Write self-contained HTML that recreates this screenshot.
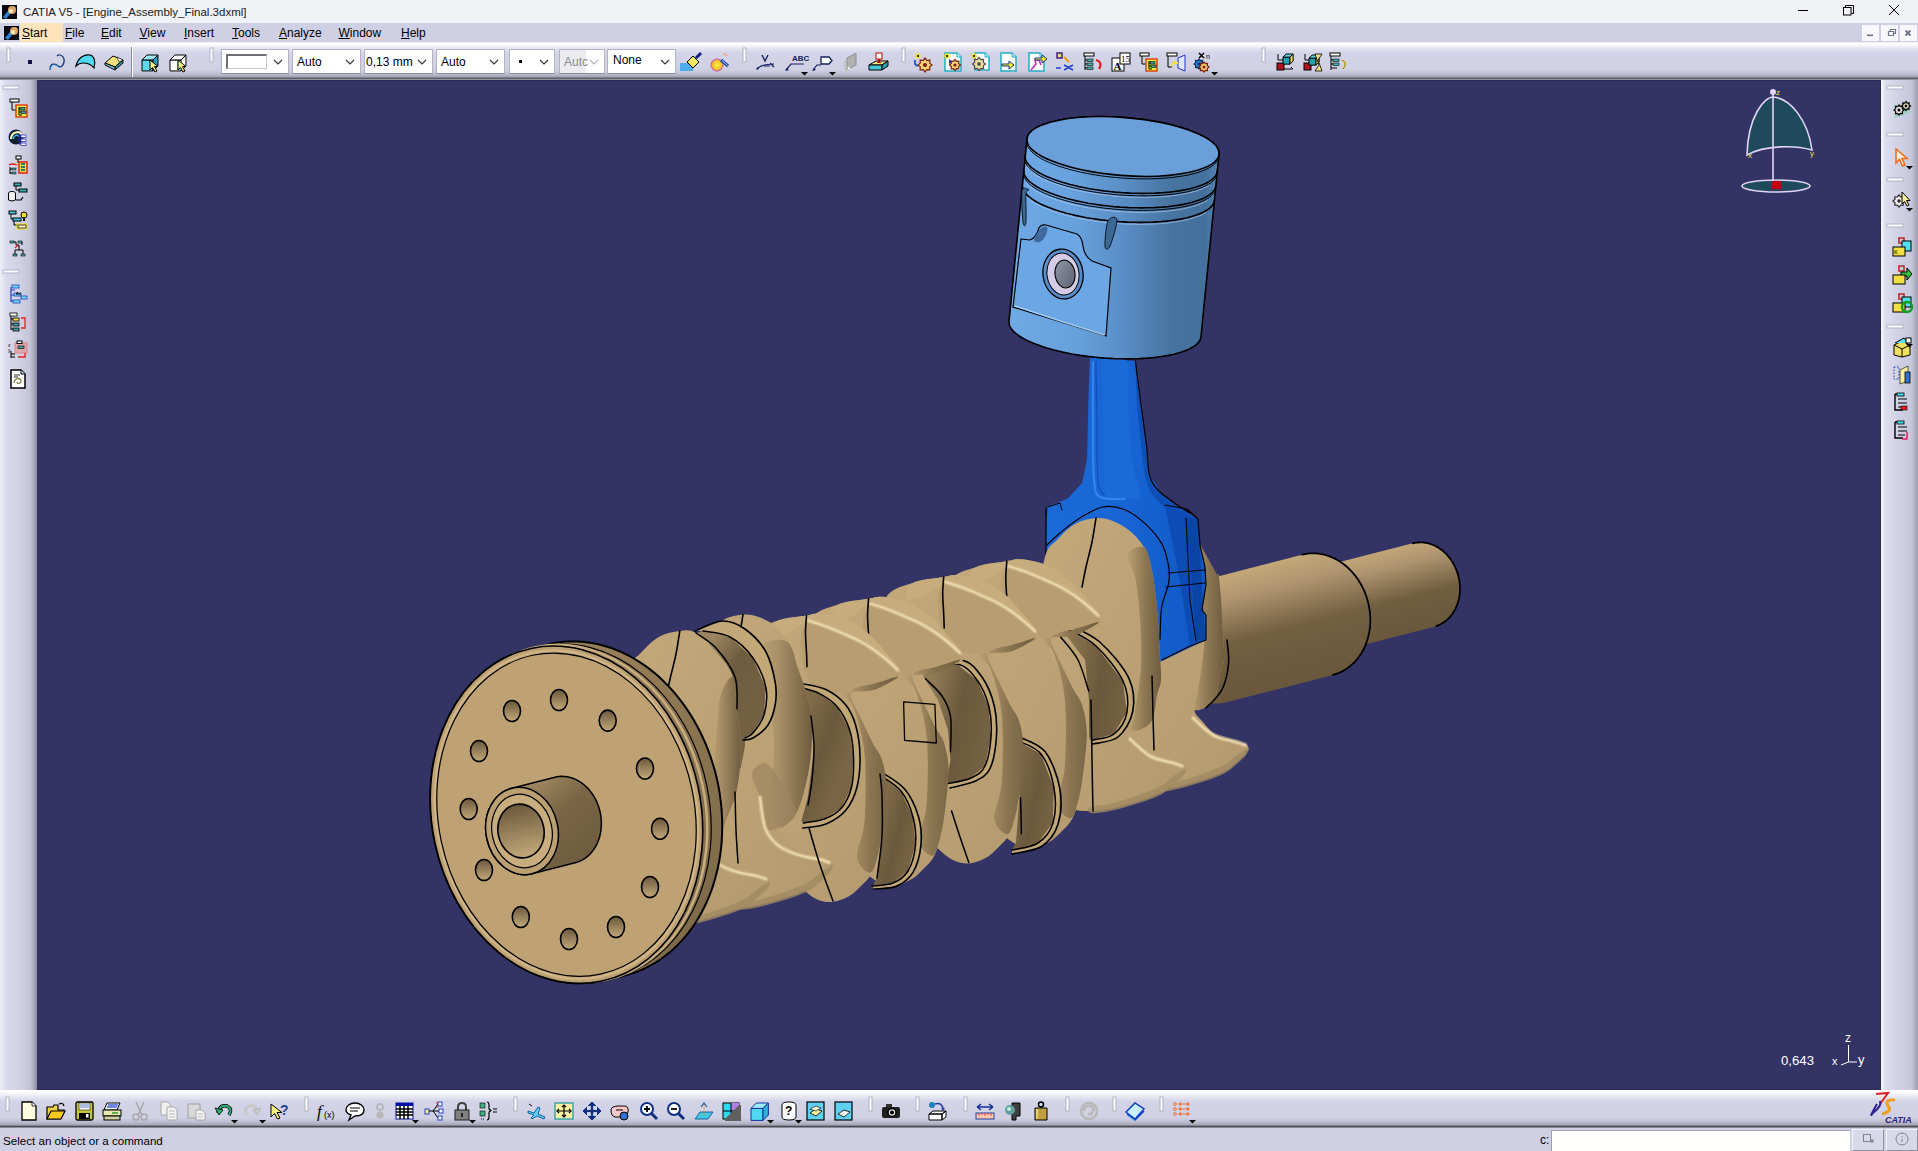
<!DOCTYPE html><html><head><meta charset="utf-8"><style>
*{margin:0;padding:0;box-sizing:border-box}
html,body{width:1918px;height:1151px;overflow:hidden;background:#d0d0e4;font-family:"Liberation Sans",sans-serif;font-size:12px;color:#000}
.abs{position:absolute}
#title{left:0;top:0;width:1918px;height:23px;background:#f0f2f5}
#menu{left:0;top:23px;width:1918px;height:19px;background:#d0d0e4}
#tb{left:0;top:42px;width:1918px;height:38px;background:linear-gradient(#e8e8f4 0px,#ffffff 1.5px,#f8f8fc 3px,#e2e2f0 7px,#d4d4e8 11px,#d0d0e4 28px,#bdbdd0 32px,#a4a4b4 35px,#4c4c54 36.2px,#8a8a98 37px,#9a9aaa 38px)}
#lt{left:0;top:80px;width:37px;height:1011px;background:linear-gradient(90deg,#eeeef8 0px,#dadaec 6px,#d0d0e4 20px,#c4c4d8 30px,#a0a0b4 35px,#8a8a9c 37px)}
#rt{left:1881px;top:80px;width:37px;height:1011px;background:linear-gradient(90deg,#fafaff 0px,#dedeee 4px,#d0d0e4 18px,#c8c8dc 30px,#a4a4b8 36px)}
#vp{left:37px;top:80px;width:1844px;height:1010px;background:#333366;overflow:hidden;border-top:1px solid #2c2c58;border-right:1px solid #2a2a52;border-bottom:1px solid #2a2a52}
#bt{left:0;top:1090px;width:1918px;height:38px;background:linear-gradient(#ffffff 0px,#fcfcff 2px,#e6e6f2 7px,#d4d4e8 11px,#d0d0e4 28px,#bdbdd0 32px,#a4a4b4 35px,#4c4c54 36.5px,#8a8a98 37.5px,#c8c8dc 38px)}
#st{left:0;top:1128px;width:1918px;height:23px;background:#d0d0e4}
.menuitem{position:absolute;top:26px;font-size:12px;color:#000}
.u{text-decoration:underline}
</style></head><body>
<div id="title" class="abs"></div>
<div id="menu" class="abs"></div>
<div id="tb" class="abs"></div>
<div id="lt" class="abs"></div>
<div id="rt" class="abs"></div>
<div id="bt" class="abs"></div>
<div id="st" class="abs"></div>
<div id="vp" class="abs"></div>
<div class="abs" style="left:23px;top:6.5px;font-size:11.5px;white-space:pre;line-height:1;color:#1a1a1a">CATIA V5 - [Engine_Assembly_Final.3dxml]</div>
<div class="abs" style="left:20px;top:23px;width:43px;height:19px;background:#fde4bd"></div>
<div class="abs" style="left:22px;top:27px;font-size:12px;white-space:pre;line-height:1;text-decoration-thickness:1px;text-underline-offset:1px"><u>S</u>tart</div>
<div class="abs" style="left:65px;top:27px;font-size:12px;white-space:pre;line-height:1;text-decoration-thickness:1px;text-underline-offset:1px"><u>F</u>ile</div>
<div class="abs" style="left:101px;top:27px;font-size:12px;white-space:pre;line-height:1;text-decoration-thickness:1px;text-underline-offset:1px"><u>E</u>dit</div>
<div class="abs" style="left:139.5px;top:27px;font-size:12px;white-space:pre;line-height:1;text-decoration-thickness:1px;text-underline-offset:1px"><u>V</u>iew</div>
<div class="abs" style="left:184px;top:27px;font-size:12px;white-space:pre;line-height:1;text-decoration-thickness:1px;text-underline-offset:1px"><u>I</u>nsert</div>
<div class="abs" style="left:232px;top:27px;font-size:12px;white-space:pre;line-height:1;text-decoration-thickness:1px;text-underline-offset:1px"><u>T</u>ools</div>
<div class="abs" style="left:279px;top:27px;font-size:12px;white-space:pre;line-height:1;text-decoration-thickness:1px;text-underline-offset:1px"><u>A</u>nalyze</div>
<div class="abs" style="left:338.5px;top:27px;font-size:12px;white-space:pre;line-height:1;text-decoration-thickness:1px;text-underline-offset:1px"><u>W</u>indow</div>
<div class="abs" style="left:401px;top:27px;font-size:12px;white-space:pre;line-height:1;text-decoration-thickness:1px;text-underline-offset:1px"><u>H</u>elp</div>
<div class="abs" style="left:1862px;top:25px;width:17px;height:16px;background:#f8f8fc"></div>
<div class="abs" style="left:1881px;top:25px;width:17px;height:16px;background:#f8f8fc"></div>
<div class="abs" style="left:1900px;top:25px;width:17px;height:16px;background:#f8f8fc"></div>
<div class="abs" style="left:221px;top:49px;width:68px;height:25px;background:#fff;border:1px solid #b4b4c0;border-bottom-color:#8c8c98"></div>
<div class="abs" style="left:226px;top:54px;width:41px;height:15px;background:#fff;border:1px solid #c8c8cc;border-top:2px solid #707070;border-left:2px solid #707070"></div>
<div class="abs" style="left:292px;top:49px;width:69px;height:25px;background:#fff;border:1px solid #b4b4c0;border-bottom-color:#8c8c98"></div>
<div class="abs" style="left:297px;top:56px;font-size:12px;white-space:pre;line-height:1;color:#000">Auto</div>
<div class="abs" style="left:364px;top:49px;width:69px;height:25px;background:#fff;border:1px solid #b4b4c0;border-bottom-color:#8c8c98"></div>
<div class="abs" style="left:366px;top:56px;font-size:12px;white-space:pre;line-height:1;color:#000">0,13 mm</div>
<div class="abs" style="left:436px;top:49px;width:69px;height:25px;background:#fff;border:1px solid #b4b4c0;border-bottom-color:#8c8c98"></div>
<div class="abs" style="left:441px;top:56px;font-size:12px;white-space:pre;line-height:1;color:#000">Auto</div>
<div class="abs" style="left:509px;top:49px;width:46px;height:25px;background:#fff;border:1px solid #b4b4c0;border-bottom-color:#8c8c98"></div>
<div class="abs" style="left:559px;top:49px;width:46px;height:25px;background:#fff;border:1px solid #b4b4c0;border-bottom-color:#8c8c98"></div>
<div class="abs" style="left:560px;top:50px;width:26px;height:23px;background:#ececf0"></div>
<div class="abs" style="left:564px;top:56px;font-size:12px;white-space:pre;line-height:1;color:#8a8a90">Autc</div>
<div class="abs" style="left:607px;top:49px;width:69px;height:25px;background:#fff;border:1px solid #b4b4c0;border-bottom-color:#8c8c98"></div>
<div class="abs" style="left:613px;top:54px;font-size:12px;white-space:pre;line-height:1;">None</div>
<div class="abs" style="left:3px;top:1135px;font-size:11.6px;white-space:pre;line-height:1;">Select an object or a command</div>
<div class="abs" style="left:1540px;top:1134px;font-size:12px;white-space:pre;line-height:1;">c:</div>
<div class="abs" style="left:1551px;top:1130px;width:299px;height:21px;background:#fffffe;border-top:1px solid #a0a0b0;border-left:1px solid #a0a0b0"></div>
<div class="abs" style="left:1852px;top:1129px;width:32px;height:22px;background:#d8d8e8;border:1px solid #f4f4fc;border-right-color:#9090a0;border-bottom-color:#9090a0"></div>
<div class="abs" style="left:1886px;top:1129px;width:32px;height:22px;background:#d8d8e8;border:1px solid #f4f4fc;border-right-color:#9090a0;border-bottom-color:#9090a0"></div>
<div class="abs" style="left:1781px;top:1054px;font-size:13.2px;white-space:pre;line-height:1;color:#fff">0,643</div>
<div class="abs" style="left:1845px;top:1032px;font-size:12px;white-space:pre;line-height:1;color:#fff">z</div>
<div class="abs" style="left:1858px;top:1053px;font-size:13px;white-space:pre;line-height:1;color:#fff">y</div>
<div class="abs" style="left:1832px;top:1056px;font-size:11px;white-space:pre;line-height:1;color:#fff">x</div>
<svg class="abs" style="left:0;top:0" width="1918" height="1151" viewBox="0 0 1918 1151">
<defs><linearGradient id="gBig" gradientUnits="userSpaceOnUse" x1="1284.6" y1="558.9" x2="1315.4" y2="679.1"><stop offset="0" stop-color="#c4a878"/><stop offset="0.2" stop-color="#b09570"/><stop offset="0.55" stop-color="#735f42"/><stop offset="1" stop-color="#6a583c"/></linearGradient><linearGradient id="gSm" gradientUnits="userSpaceOnUse" x1="1389.3" y1="549.3" x2="1410.7" y2="632.7"><stop offset="0" stop-color="#c2a676"/><stop offset="0.2" stop-color="#ae9470"/><stop offset="0.6" stop-color="#715e41"/><stop offset="1" stop-color="#6a583c"/></linearGradient><linearGradient id="gUp" gradientUnits="userSpaceOnUse" x1="0.0" y1="0.0" x2="0.0" y2="0.0"><stop offset="0" stop-color="#c2a778"/><stop offset="1" stop-color="#b09569"/></linearGradient><linearGradient id="gNeck" x1="0" y1="0" x2="1" y2="0"><stop offset="0" stop-color="#b89e72"/><stop offset="0.5" stop-color="#8a7450"/><stop offset="1" stop-color="#6e5c40"/></linearGradient><linearGradient id="gSide" x1="0" y1="0" x2="1" y2="0"><stop offset="0" stop-color="#bca274"/><stop offset="0.5" stop-color="#8f7954"/><stop offset="1" stop-color="#6e5c40"/></linearGradient><linearGradient id="gSide2" x1="0" y1="0" x2="1" y2="0"><stop offset="0" stop-color="#bca274"/><stop offset="0.35" stop-color="#a89068"/><stop offset="0.75" stop-color="#87714e"/><stop offset="1" stop-color="#6e5c40"/></linearGradient><linearGradient id="gWeb" x1="0" y1="0" x2="1" y2="1"><stop offset="0" stop-color="#c4a97b"/><stop offset="1" stop-color="#b39a6e"/></linearGradient><linearGradient id="gJ1" gradientUnits="userSpaceOnUse" x1="705.0" y1="650.0" x2="765.0" y2="690.0"><stop offset="0" stop-color="#9b8560"/><stop offset="0.45" stop-color="#6e5c40"/><stop offset="1" stop-color="#746144"/></linearGradient><linearGradient id="gJ2" gradientUnits="userSpaceOnUse" x1="805.0" y1="720.0" x2="855.0" y2="740.0"><stop offset="0" stop-color="#7e6a49"/><stop offset="0.5" stop-color="#6b593d"/><stop offset="1" stop-color="#7a6646"/></linearGradient><linearGradient id="gJ3" gradientUnits="userSpaceOnUse" x1="880.0" y1="820.0" x2="920.0" y2="830.0"><stop offset="0" stop-color="#7e6a49"/><stop offset="0.5" stop-color="#6b593d"/><stop offset="1" stop-color="#7a6646"/></linearGradient><linearGradient id="gJ4" gradientUnits="userSpaceOnUse" x1="925.0" y1="720.0" x2="995.0" y2="735.0"><stop offset="0" stop-color="#8f7a55"/><stop offset="0.45" stop-color="#6b593d"/><stop offset="1" stop-color="#776344"/></linearGradient><linearGradient id="gJ5" gradientUnits="userSpaceOnUse" x1="1012.0" y1="790.0" x2="1060.0" y2="800.0"><stop offset="0" stop-color="#7e6a49"/><stop offset="0.5" stop-color="#6b593d"/><stop offset="1" stop-color="#7a6646"/></linearGradient><linearGradient id="gJ6" gradientUnits="userSpaceOnUse" x1="1063.0" y1="690.0" x2="1133.0" y2="700.0"><stop offset="0" stop-color="#8a7450"/><stop offset="0.5" stop-color="#6b593d"/><stop offset="1" stop-color="#776344"/></linearGradient><linearGradient id="gRod" gradientUnits="userSpaceOnUse" x1="1046.0" y1="500.0" x2="1206.0" y2="500.0"><stop offset="0" stop-color="#1c6ad8"/><stop offset="0.5" stop-color="#1864d4"/><stop offset="1" stop-color="#1058c4"/></linearGradient><linearGradient id="gRim" x1="0" y1="0" x2="1" y2="1"><stop offset="0" stop-color="#a48a62"/><stop offset="0.6" stop-color="#8a7450"/><stop offset="1" stop-color="#7a6646"/></linearGradient><linearGradient id="gHole" gradientUnits="userSpaceOnUse" x1="0.0" y1="-10.0" x2="0.0" y2="10.0"><stop offset="0" stop-color="#6e5c40"/><stop offset="1" stop-color="#c8ad7e"/></linearGradient><linearGradient id="gH" x1="0" y1="0" x2="0" y2="1"><stop offset="0" stop-color="#6a583c"/><stop offset="1" stop-color="#c4a97a"/></linearGradient><linearGradient id="gHub" x1="0" y1="0" x2="1" y2="1"><stop offset="0" stop-color="#c0a577"/><stop offset="0.5" stop-color="#7a6646"/><stop offset="1" stop-color="#6a583c"/></linearGradient><linearGradient id="gPist" gradientUnits="userSpaceOnUse" x1="1010.0" y1="250.0" x2="1215.0" y2="250.0"><stop offset="0" stop-color="#70a9e6"/><stop offset="0.3" stop-color="#68a2de"/><stop offset="0.55" stop-color="#5a8ec6"/><stop offset="0.8" stop-color="#46739f"/><stop offset="0.95" stop-color="#44709c"/><stop offset="1" stop-color="#5080b0"/></linearGradient><linearGradient id="gPin" x1="0" y1="0" x2="1" y2="1"><stop offset="0" stop-color="#9098a8"/><stop offset="1" stop-color="#5c6070"/></linearGradient></defs><path d="M1293.5,604.6 L1293.6,602.4 L1293.8,600.2 L1294.1,598.0 L1294.5,595.9 L1294.9,593.8 L1295.5,591.7 L1296.2,589.7 L1296.9,587.8 L1297.8,585.9 L1298.7,584.0 L1299.8,582.2 L1300.9,580.5 L1302.1,578.9 L1303.3,577.4 L1304.7,575.9 L1306.1,574.6 L1307.5,573.3 L1309.1,572.1 L1310.7,571.1 L1312.3,570.1 L1314.0,569.2 L1315.8,568.5 L1317.5,567.9 L1319.3,567.3 L1412.8,543.3 L1414.7,542.9 L1416.5,542.6 L1418.4,542.5 L1420.3,542.4 L1422.2,542.4 L1424.1,542.6 L1426.0,542.9 L1428.0,543.3 L1429.8,543.8 L1431.7,544.5 L1433.6,545.2 L1435.4,546.0 L1437.2,547.0 L1438.9,548.1 L1440.6,549.2 L1442.3,550.5 L1443.9,551.8 L1445.5,553.3 L1447.0,554.8 L1448.4,556.4 L1449.7,558.1 L1451.0,559.9 L1452.2,561.7 L1453.4,563.6 L1454.4,565.6 L1455.4,567.6 L1456.3,569.7 L1457.1,571.8 L1457.8,573.9 L1458.4,576.1 L1458.9,578.3 L1459.3,580.5 L1459.6,582.7 L1459.8,584.9 L1460.0,587.2 L1460.0,589.4 L1459.9,591.6 L1459.7,593.8 L1459.4,596.0 L1459.0,598.1 L1458.6,600.2 L1458.0,602.3 L1457.3,604.3 L1456.6,606.2 L1455.7,608.1 L1454.8,610.0 L1453.7,611.8 L1452.6,613.5 L1451.4,615.1 L1450.2,616.6 L1448.8,618.1 L1447.4,619.4 L1446.0,620.7 L1444.4,621.9 L1442.8,622.9 L1441.2,623.9 L1439.5,624.8 L1437.8,625.5 L1436.0,626.1 L1434.2,626.7 L1340.7,650.7 L1338.8,651.1 L1337.0,651.4 L1335.1,651.5 L1333.2,651.6 L1331.3,651.6 L1329.4,651.4 L1327.5,651.1 L1325.5,650.7 L1323.7,650.2 L1321.8,649.5 L1319.9,648.8 L1318.1,648.0 L1316.3,647.0 L1314.6,645.9 L1312.9,644.8 L1311.2,643.5 L1309.6,642.2 L1308.0,640.7 L1306.5,639.2 L1305.1,637.6 L1303.8,635.9 L1302.5,634.1 L1301.2,632.3 L1300.1,630.4 L1299.1,628.4 L1298.1,626.4 L1297.2,624.3 L1296.4,622.2 L1295.7,620.1 L1295.1,617.9 L1294.6,615.7 L1294.2,613.5 L1293.9,611.3 L1293.7,609.1 L1293.5,606.8Z" fill="url(#gSm)" />
<path d="M" fill="none" stroke="#000" stroke-width="0" stroke-linejoin="round" stroke-linecap="round" />
<path d="M1412.8,543.3 L1414.6,542.9 L1416.5,542.6 L1418.3,542.5 L1420.2,542.4 L1422.0,542.4 L1423.9,542.6 L1425.8,542.9 L1427.6,543.2 L1429.5,543.7 L1431.3,544.3 L1433.2,545.0 L1434.9,545.8 L1436.7,546.7 L1438.4,547.8 L1440.1,548.9 L1441.8,550.1 L1443.4,551.4 L1444.9,552.8 L1446.4,554.2 L1447.8,555.8 L1449.2,557.4 L1450.5,559.1 L1451.7,560.9 L1452.8,562.7 L1453.9,564.6 L1454.9,566.6 L1455.8,568.5 L1456.6,570.6 L1457.4,572.7 L1458.0,574.8 L1458.6,576.9 L1459.1,579.1 L1459.4,581.2 L1459.7,583.4 L1459.9,585.6 L1460.0,587.8 L1460.0,590.0 L1459.9,592.1 L1459.7,594.3 L1459.4,596.4 L1459.0,598.5 L1458.5,600.5 L1457.9,602.6 L1457.2,604.5 L1456.5,606.4 L1455.6,608.3 L1454.7,610.1 L1453.7,611.8 L1452.6,613.5 L1451.4,615.1 L1450.2,616.6 L1448.9,618.0 L1447.5,619.4 L1446.1,620.6 L1444.6,621.8 L1443.0,622.8 L1441.4,623.8 L1439.8,624.6 L1438.1,625.4 L1436.3,626.0" fill="none" stroke="#000" stroke-width="1.8" stroke-linejoin="round" stroke-linecap="round" />
<path d="M1159.3,635.7 L1159.5,632.5 L1159.7,629.4 L1160.1,626.2 L1160.7,623.1 L1161.4,620.1 L1162.2,617.1 L1163.2,614.2 L1164.3,611.4 L1165.5,608.6 L1166.9,606.0 L1168.3,603.4 L1169.9,601.0 L1171.7,598.6 L1173.5,596.4 L1175.4,594.3 L1177.5,592.4 L1179.6,590.5 L1181.8,588.9 L1184.1,587.3 L1186.5,585.9 L1188.9,584.7 L1191.4,583.6 L1194.0,582.7 L1196.6,581.9 L1302.2,554.7 L1304.9,554.1 L1307.6,553.7 L1310.3,553.4 L1313.0,553.4 L1315.8,553.4 L1318.5,553.7 L1321.3,554.1 L1324.0,554.7 L1326.8,555.4 L1329.5,556.3 L1332.2,557.4 L1334.8,558.6 L1337.4,560.0 L1339.9,561.5 L1342.4,563.2 L1344.8,565.0 L1347.1,567.0 L1349.3,569.0 L1351.5,571.3 L1353.5,573.6 L1355.5,576.0 L1357.4,578.6 L1359.1,581.2 L1360.8,584.0 L1362.3,586.8 L1363.7,589.7 L1365.0,592.7 L1366.1,595.7 L1367.1,598.8 L1368.0,601.9 L1368.7,605.1 L1369.3,608.2 L1369.8,611.5 L1370.1,614.7 L1370.2,617.9 L1370.3,621.1 L1370.2,624.3 L1369.9,627.5 L1369.5,630.6 L1368.9,633.7 L1368.2,636.7 L1367.4,639.7 L1366.4,642.6 L1365.3,645.4 L1364.1,648.2 L1362.7,650.8 L1361.3,653.4 L1359.7,655.8 L1357.9,658.2 L1356.1,660.4 L1354.2,662.5 L1352.1,664.4 L1350.0,666.3 L1347.8,668.0 L1345.5,669.5 L1343.1,670.9 L1340.7,672.1 L1338.2,673.2 L1335.6,674.1 L1333.0,674.9 L1227.4,702.1 L1224.7,702.7 L1222.0,703.1 L1219.3,703.4 L1216.6,703.5 L1213.8,703.4 L1211.0,703.1 L1208.3,702.7 L1205.5,702.1 L1202.8,701.4 L1200.1,700.5 L1197.5,699.4 L1194.8,698.2 L1192.2,696.8 L1189.7,695.3 L1187.2,693.6 L1184.8,691.8 L1182.5,689.8 L1180.3,687.8 L1178.1,685.5 L1176.0,683.2 L1174.1,680.8 L1172.2,678.2 L1170.5,675.6 L1168.8,672.8 L1167.3,670.0 L1165.9,667.1 L1164.6,664.1 L1163.5,661.1 L1162.5,658.0 L1161.6,654.9 L1160.9,651.7 L1160.3,648.5 L1159.8,645.3 L1159.5,642.1 L1159.3,638.9Z" fill="url(#gBig)" />
<path d="M1302.2,554.7 L1304.9,554.1 L1307.6,553.7 L1310.3,553.4 L1313.0,553.4 L1315.8,553.4 L1318.5,553.7 L1321.3,554.1 L1324.0,554.7 L1326.8,555.4 L1329.5,556.3 L1332.1,557.4 L1334.8,558.6 L1337.4,560.0 L1339.9,561.5 L1342.4,563.2 L1344.8,565.0 L1347.1,567.0 L1349.3,569.1 L1351.5,571.3 L1353.5,573.6 L1355.5,576.0 L1357.4,578.6 L1359.1,581.2 L1360.8,584.0 L1362.3,586.8 L1363.7,589.7 L1365.0,592.7 L1366.1,595.7 L1367.1,598.8 L1368.0,601.9 L1368.7,605.1 L1369.3,608.3 L1369.8,611.5 L1370.1,614.7 L1370.3,617.9 L1370.3,621.1 L1370.2,624.3 L1369.9,627.5 L1369.5,630.6 L1368.9,633.7 L1368.2,636.7 L1367.4,639.7 L1366.4,642.6 L1365.3,645.4 L1364.1,648.2 L1362.7,650.8 L1361.3,653.4 L1359.7,655.8 L1357.9,658.2 L1356.1,660.4 L1354.2,662.5 L1352.1,664.4 L1350.0,666.3 L1347.8,668.0 L1345.5,669.5 L1343.1,670.9 L1340.7,672.1 L1338.2,673.2 L1335.6,674.1 L1333.0,674.9" fill="none" stroke="#000" stroke-width="1.8" stroke-linejoin="round" stroke-linecap="round" />
<path d="M1098.0,596.0 C1100.5,574.3 1104.3,548.8 1108.0,536.0 C1111.7,523.2 1115.0,524.5 1120.0,519.0 C1125.0,513.5 1131.5,506.7 1138.0,503.0 C1144.5,499.3 1152.7,497.5 1159.0,497.0 C1165.3,496.5 1170.3,497.8 1176.0,500.0 C1181.7,502.2 1187.8,505.7 1193.0,510.0 C1198.2,514.3 1203.5,520.2 1207.0,526.0 C1210.5,531.8 1212.2,537.8 1214.0,545.0 C1215.8,552.2 1216.8,560.0 1218.0,569.0 C1219.2,578.0 1220.2,588.0 1221.0,599.0 C1221.8,610.0 1222.5,625.0 1223.0,635.0 C1223.5,645.0 1224.5,652.5 1224.0,659.0 C1223.5,665.5 1221.7,667.0 1220.0,674.0 C1218.3,681.0 1218.2,695.0 1214.0,701.0 C1209.8,707.0 1196.8,706.5 1195.0,710.0 C1193.2,713.5 1200.0,718.2 1203.0,722.0 C1206.0,725.8 1209.2,730.0 1213.0,733.0 C1216.8,736.0 1221.8,738.3 1226.0,740.0 C1230.2,741.7 1234.3,742.0 1238.0,743.0 C1241.7,744.0 1246.7,744.3 1248.0,746.0 C1249.3,747.7 1247.3,750.8 1246.0,753.0 C1244.7,755.2 1243.5,756.0 1240.0,759.0 C1236.5,762.0 1231.3,767.5 1225.0,771.0 C1218.7,774.5 1210.7,777.2 1202.0,780.0 C1193.3,782.8 1181.0,786.3 1173.0,788.0 C1165.0,789.7 1160.3,790.0 1154.0,790.0 C1147.7,790.0 1141.8,790.3 1135.0,788.0 C1128.2,785.7 1119.2,783.0 1113.0,776.0 C1106.8,769.0 1101.3,764.3 1098.0,746.0 C1094.7,727.7 1093.0,691.0 1093.0,666.0 C1093.0,641.0 1095.5,617.7 1098.0,596.0Z" fill="url(#gWeb)" />
<path d="M1207.0,526.0 C1211.0,527.8 1212.2,537.8 1214.0,545.0 C1215.8,552.2 1216.8,560.0 1218.0,569.0 C1219.2,578.0 1220.2,588.0 1221.0,599.0 C1221.8,610.0 1222.5,625.0 1223.0,635.0 C1223.5,645.0 1224.5,652.5 1224.0,659.0 C1223.5,665.5 1221.7,667.0 1220.0,674.0 C1218.3,681.0 1218.2,695.0 1214.0,701.0 C1209.8,707.0 1197.7,711.7 1195.0,710.0 C1192.3,708.3 1196.5,701.7 1198.0,691.0 C1199.5,680.3 1203.2,661.8 1204.0,646.0 C1204.8,630.2 1204.0,611.0 1203.0,596.0 C1202.0,581.0 1200.2,566.3 1198.0,556.0 C1195.8,545.7 1188.5,539.0 1190.0,534.0 C1191.5,529.0 1203.0,524.2 1207.0,526.0Z" fill="url(#gSide)" />
<path d="M1249.0,748.0 C1250.3,748.2 1247.5,752.8 1246.0,755.0 C1244.5,757.2 1243.5,758.0 1240.0,761.0 C1236.5,764.0 1231.3,769.5 1225.0,773.0 C1218.7,776.5 1210.7,779.2 1202.0,782.0 C1193.3,784.8 1181.0,788.3 1173.0,790.0 C1165.0,791.7 1157.3,792.7 1154.0,792.0 C1150.7,791.3 1149.8,787.5 1153.0,786.0 C1156.2,784.5 1164.8,785.0 1173.0,783.0 C1181.2,781.0 1193.5,777.0 1202.0,774.0 C1210.5,771.0 1218.0,768.3 1224.0,765.0 C1230.0,761.7 1233.8,756.8 1238.0,754.0 C1242.2,751.2 1247.7,747.8 1249.0,748.0Z" fill="#a08962" opacity="0.8"/>
<path d="M1193.0,718.0 C1196.3,720.8 1205.8,731.0 1213.0,735.0 C1220.2,739.0 1230.7,740.3 1236.0,742.0 C1241.3,743.7 1243.5,744.5 1245.0,745.0" fill="none" stroke="#d8c292" stroke-width="5" stroke-linecap="round" opacity="0.6"/>
<path d="M1193.0,718.0 C1196.3,720.8 1205.8,731.0 1213.0,735.0 C1220.2,739.0 1230.7,740.3 1236.0,742.0 C1241.3,743.7 1243.5,744.5 1245.0,745.0" fill="none" stroke="#ecdcb0" stroke-width="2.2" stroke-linecap="round" opacity="0.85"/>
<path d="M1159.0,497.0 C1158.3,501.0 1156.7,512.8 1155.0,521.0 C1153.3,529.2 1150.7,538.5 1149.0,546.0 C1147.3,553.5 1145.7,562.7 1145.0,566.0" fill="none" stroke="#000" stroke-width="1.6" stroke-linecap="round" />
<path d="M1150.0,470.0 L1245.0,470.0 L1245.0,567.0 L1217.0,574.5 L1200.0,544.0 L1183.0,515.0 L1150.0,505.0Z" fill="#333366" />
<path d="M1090.0,358.0 L1088.5,397.0 L1087.0,459.5 L1082.0,483.0 L1068.0,498.6 L1047.8,506.4 L1046.0,530.0 L1046.0,600.0 L1100.0,640.0 L1160.0,662.0 L1185.0,650.0 L1206.0,640.0 L1206.0,615.0 L1202.0,610.0 L1206.0,585.0 L1205.0,567.0 L1200.0,545.0 L1198.0,519.0 L1187.0,512.7 L1174.5,504.8 L1162.0,494.0 L1149.5,475.0 L1146.3,443.8 L1140.0,397.0 L1135.4,361.0Z" fill="url(#gRod)" />
<path d="M1094.0,360.0 C1089.8,360.0 1099.5,350.0 1101.0,360.0 C1102.5,370.0 1102.5,400.0 1103.0,420.0 C1103.5,440.0 1103.2,467.3 1104.0,480.0 C1104.8,492.7 1104.0,493.0 1108.0,496.0 C1112.0,499.0 1122.7,498.0 1128.0,498.0 C1133.3,498.0 1139.3,502.3 1140.0,496.0 C1140.7,489.7 1134.0,476.0 1132.0,460.0 C1130.0,444.0 1129.0,416.7 1128.0,400.0 C1127.0,383.3 1131.7,366.7 1126.0,360.0 C1120.3,353.3 1098.2,360.0 1094.0,360.0Z" fill="#1a6ad8" />
<path d="M1093.0,362.0 C1093.0,373.3 1092.8,410.3 1093.0,430.0 C1093.2,449.7 1092.8,468.8 1094.0,480.0 C1095.2,491.2 1094.8,493.8 1100.0,497.0 C1105.2,500.2 1120.8,498.7 1125.0,499.0" fill="none" stroke="#3a8cf4" stroke-width="2.2" stroke-linecap="round" opacity="0.8"/>
<path d="M1096.0,362.0 C1096.2,373.3 1096.7,410.0 1097.0,430.0 C1097.3,450.0 1096.8,471.2 1098.0,482.0 C1099.2,492.8 1103.0,492.8 1104.0,495.0" fill="none" stroke="#0c4cb0" stroke-width="1.2" stroke-linecap="round" opacity="0.8"/>
<path d="M1135.4,361.0 C1135.9,360.5 1138.2,383.2 1140.0,397.0 C1141.8,410.8 1144.7,430.8 1146.3,443.8 C1147.9,456.8 1146.9,466.6 1149.5,475.0 C1152.1,483.4 1157.8,489.0 1162.0,494.0 C1166.2,499.0 1170.3,501.7 1174.5,504.8 C1178.7,507.9 1187.8,511.8 1187.0,512.7 C1186.2,513.6 1175.3,512.5 1170.0,510.0 C1164.7,507.6 1159.0,503.0 1155.0,498.0 C1151.0,493.0 1148.3,488.8 1146.0,480.0 C1143.7,471.2 1142.5,458.3 1141.0,445.0 C1139.5,431.7 1137.9,414.0 1137.0,400.0 C1136.1,386.0 1134.9,361.5 1135.4,361.0Z" fill="#0c50b8" />
<path d="M1135.4,361.0 C1136.2,367.0 1138.2,383.2 1140.0,397.0 C1141.8,410.8 1144.7,430.8 1146.3,443.8 C1147.9,456.8 1147.5,467.3 1149.5,475.0 C1151.5,482.7 1153.8,485.3 1158.0,490.0 C1162.2,494.7 1169.2,499.2 1174.5,503.0 C1179.8,506.8 1187.4,511.3 1190.0,513.0" fill="none" stroke="#000" stroke-width="1.2" stroke-linecap="round" />
<path d="M1165.0,505.0 L1198.0,519.0 L1205.0,639.0 L1190.0,645.0 L1183.0,600.0 L1176.0,560.0 L1170.0,530.0Z" fill="#0c4cb4" />
<path d="M1185.0,518.0 L1198.0,519.0 L1205.0,639.0 L1196.0,641.0 L1192.0,580.0Z" fill="#0a44a4" />
<path d="M1165.0,505.0 L1187.0,509.0 L1198.0,519.0 L1200.0,545.0 L1205.0,567.0 L1206.0,585.0 L1202.0,610.0 L1206.0,615.0 L1206.0,640.0 L1190.0,646.0 L1162.0,660.0" fill="none" stroke="#000" stroke-width="1.2" stroke-linejoin="round" stroke-linecap="round" />
<path d="M1186.0,518.0 L1188.0,560.0 L1190.0,600.0 L1196.0,641.0" fill="none" stroke="#000" stroke-width="1.0" stroke-linejoin="round" stroke-linecap="round" />
<path d="M1168.0,573.0 L1205.0,570.0" fill="none" stroke="#000" stroke-width="1.0" stroke-linejoin="round" stroke-linecap="round" />
<path d="M1166.0,587.0 L1205.0,583.0" fill="none" stroke="#000" stroke-width="1.0" stroke-linejoin="round" stroke-linecap="round" />
<path d="M1047.0,545.0 C1049.2,543.0 1054.5,537.5 1060.0,533.0 C1065.5,528.5 1072.9,522.3 1080.0,518.0 C1087.1,513.7 1095.3,508.5 1102.5,507.0 C1109.7,505.5 1116.1,506.4 1123.0,509.0 C1129.9,511.6 1137.6,516.9 1144.0,522.6 C1150.4,528.3 1157.5,536.2 1161.6,543.4 C1165.7,550.6 1167.4,559.3 1168.6,566.0 C1169.8,572.7 1169.8,576.4 1168.6,583.4 C1167.4,590.4 1163.0,598.3 1161.6,607.7 C1160.2,617.1 1160.3,634.6 1160.0,640.0" fill="none" stroke="#000" stroke-width="1.2" stroke-linecap="round" />
<path d="M1046.0,508.0 L1046.0,560.0" fill="none" stroke="#000" stroke-width="1.2" stroke-linejoin="round" stroke-linecap="round" />
<path d="M1048.0,507.0 L1060.0,503.0 L1062.0,510.0" fill="none" stroke="#000" stroke-width="1.0" stroke-linejoin="round" stroke-linecap="round" />
<path d="M1035.0,617.0 C1037.5,595.3 1041.3,569.8 1045.0,557.0 C1048.7,544.2 1052.0,545.5 1057.0,540.0 C1062.0,534.5 1068.5,527.7 1075.0,524.0 C1081.5,520.3 1089.7,518.5 1096.0,518.0 C1102.3,517.5 1107.3,518.8 1113.0,521.0 C1118.7,523.2 1124.8,526.7 1130.0,531.0 C1135.2,535.3 1140.5,541.2 1144.0,547.0 C1147.5,552.8 1149.2,558.8 1151.0,566.0 C1152.8,573.2 1153.8,581.0 1155.0,590.0 C1156.2,599.0 1157.2,609.0 1158.0,620.0 C1158.8,631.0 1159.5,646.0 1160.0,656.0 C1160.5,666.0 1161.5,673.5 1161.0,680.0 C1160.5,686.5 1158.7,688.0 1157.0,695.0 C1155.3,702.0 1155.2,716.0 1151.0,722.0 C1146.8,728.0 1133.8,727.5 1132.0,731.0 C1130.2,734.5 1137.0,739.2 1140.0,743.0 C1143.0,746.8 1146.2,751.0 1150.0,754.0 C1153.8,757.0 1158.8,759.3 1163.0,761.0 C1167.2,762.7 1171.3,763.0 1175.0,764.0 C1178.7,765.0 1183.7,765.3 1185.0,767.0 C1186.3,768.7 1184.3,771.8 1183.0,774.0 C1181.7,776.2 1180.5,777.0 1177.0,780.0 C1173.5,783.0 1168.3,788.5 1162.0,792.0 C1155.7,795.5 1147.7,798.2 1139.0,801.0 C1130.3,803.8 1118.0,807.3 1110.0,809.0 C1102.0,810.7 1097.3,811.0 1091.0,811.0 C1084.7,811.0 1078.8,811.3 1072.0,809.0 C1065.2,806.7 1056.2,804.0 1050.0,797.0 C1043.8,790.0 1038.3,785.3 1035.0,767.0 C1031.7,748.7 1030.0,712.0 1030.0,687.0 C1030.0,662.0 1032.5,638.7 1035.0,617.0Z" fill="url(#gWeb)" />
<path d="M1144.0,547.0 C1148.0,548.8 1149.2,558.8 1151.0,566.0 C1152.8,573.2 1153.8,581.0 1155.0,590.0 C1156.2,599.0 1157.2,609.0 1158.0,620.0 C1158.8,631.0 1159.5,646.0 1160.0,656.0 C1160.5,666.0 1161.5,673.5 1161.0,680.0 C1160.5,686.5 1158.7,688.0 1157.0,695.0 C1155.3,702.0 1155.2,716.0 1151.0,722.0 C1146.8,728.0 1134.7,732.7 1132.0,731.0 C1129.3,729.3 1133.5,722.7 1135.0,712.0 C1136.5,701.3 1140.2,682.8 1141.0,667.0 C1141.8,651.2 1141.0,632.0 1140.0,617.0 C1139.0,602.0 1137.2,587.3 1135.0,577.0 C1132.8,566.7 1125.5,560.0 1127.0,555.0 C1128.5,550.0 1140.0,545.2 1144.0,547.0Z" fill="url(#gSide)" />
<path d="M1186.0,769.0 C1187.3,769.2 1184.5,773.8 1183.0,776.0 C1181.5,778.2 1180.5,779.0 1177.0,782.0 C1173.5,785.0 1168.3,790.5 1162.0,794.0 C1155.7,797.5 1147.7,800.2 1139.0,803.0 C1130.3,805.8 1118.0,809.3 1110.0,811.0 C1102.0,812.7 1094.3,813.7 1091.0,813.0 C1087.7,812.3 1086.8,808.5 1090.0,807.0 C1093.2,805.5 1101.8,806.0 1110.0,804.0 C1118.2,802.0 1130.5,798.0 1139.0,795.0 C1147.5,792.0 1155.0,789.3 1161.0,786.0 C1167.0,782.7 1170.8,777.8 1175.0,775.0 C1179.2,772.2 1184.7,768.8 1186.0,769.0Z" fill="#a08962" opacity="0.8"/>
<path d="M1130.0,739.0 C1133.3,741.8 1142.8,752.0 1150.0,756.0 C1157.2,760.0 1167.7,761.3 1173.0,763.0 C1178.3,764.7 1180.5,765.5 1182.0,766.0" fill="none" stroke="#d8c292" stroke-width="5" stroke-linecap="round" opacity="0.6"/>
<path d="M1130.0,739.0 C1133.3,741.8 1142.8,752.0 1150.0,756.0 C1157.2,760.0 1167.7,761.3 1173.0,763.0 C1178.3,764.7 1180.5,765.5 1182.0,766.0" fill="none" stroke="#ecdcb0" stroke-width="2.2" stroke-linecap="round" opacity="0.85"/>
<path d="M1096.0,518.0 C1095.3,522.0 1093.7,533.8 1092.0,542.0 C1090.3,550.2 1087.7,559.5 1086.0,567.0 C1084.3,574.5 1082.7,583.7 1082.0,587.0" fill="none" stroke="#000" stroke-width="1.6" stroke-linecap="round" />
<path d="M1063.0,631.0 L1085.0,660.0 L1089.0,700.5 L1089.0,737.0 L1092.5,744.0 L1092.5,740.0 L1114.0,734.0 L1127.0,712.0 L1123.0,681.0 L1096.0,646.0 L1066.0,628.0Z" fill="url(#gJ6)" />
<path d="M1067.0,624.0 L1099.8,642.0 L1129.0,678.6 L1132.7,711.5 L1118.0,737.0 L1092.5,744.0 L1092.5,740.0 L1114.0,734.0 L1127.0,712.0 L1123.0,681.0 L1096.0,646.0 L1066.0,628.0Z" fill="#c2a777" />
<path d="M1066.0,628.0 C1071.0,631.0 1086.5,637.2 1096.0,646.0 C1105.5,654.8 1117.8,670.0 1123.0,681.0 C1128.2,692.0 1128.5,703.2 1127.0,712.0 C1125.5,720.8 1119.8,729.3 1114.0,734.0 C1108.2,738.7 1096.1,739.0 1092.5,740.0" fill="none" stroke="#000" stroke-width="1.5" stroke-linecap="round" />
<path d="M1067.0,624.0 C1072.5,627.0 1089.5,632.9 1099.8,642.0 C1110.1,651.1 1123.5,667.0 1129.0,678.6 C1134.5,690.2 1134.5,701.8 1132.7,711.5 C1130.9,721.2 1124.7,731.6 1118.0,737.0 C1111.3,742.4 1096.8,742.8 1092.5,744.0" fill="none" stroke="#000" stroke-width="1.6" stroke-linecap="round" />
<path d="M950.8,579.2 C956.3,572.4 966.5,570.2 975.8,567.2 C985.1,564.2 999.5,562.5 1006.8,561.2 C1014.1,559.9 1014.6,559.0 1019.8,559.2 C1025.0,559.4 1032.3,560.7 1037.8,562.2 C1043.3,563.7 1047.5,565.2 1052.8,568.2 C1058.1,571.2 1064.8,575.9 1069.8,580.2 C1074.8,584.5 1078.5,589.4 1082.8,594.2 C1087.1,599.0 1092.8,605.2 1095.8,609.2 C1098.8,613.2 1099.8,616.2 1100.8,618.2 C1101.8,620.2 1102.6,619.9 1101.8,621.2 C1101.0,622.5 1100.3,624.9 1095.8,626.2 C1091.3,627.5 1081.1,627.7 1074.8,628.8 C1068.5,629.9 1062.0,630.1 1057.8,632.9 C1053.5,635.7 1050.2,641.1 1049.3,645.5 C1048.3,649.9 1050.2,654.8 1052.1,659.4 C1054.0,664.0 1057.7,666.7 1060.8,673.2 C1063.9,679.7 1068.1,689.0 1070.8,698.2 C1073.5,707.4 1075.0,716.5 1076.8,728.2 C1078.6,739.9 1081.1,757.4 1081.8,768.2 C1082.5,779.0 1081.8,786.2 1080.8,793.2 C1079.8,800.2 1077.5,805.5 1075.8,810.2 C1074.1,814.9 1073.0,817.9 1070.8,821.2 C1068.6,824.5 1066.5,826.7 1062.8,830.2 C1059.1,833.7 1054.3,839.3 1048.8,842.2 C1043.3,845.1 1036.1,847.9 1029.8,847.7 C1023.5,847.5 1017.3,845.9 1010.8,841.0 C1004.3,836.1 996.6,830.3 990.8,818.2 C985.0,806.1 980.0,786.5 975.8,768.2 C971.6,749.9 970.0,728.2 965.8,708.2 C961.6,688.2 954.6,664.9 950.8,648.2 C947.0,631.5 942.8,619.7 942.8,608.2 C942.8,596.7 945.3,586.0 950.8,579.2Z" fill="url(#gWeb)" />
<path d="M975.8,567.2 C981.8,563.5 999.5,562.5 1006.8,561.2 C1014.1,559.9 1014.6,559.0 1019.8,559.2 C1025.0,559.4 1032.3,560.7 1037.8,562.2 C1043.3,563.7 1047.5,565.2 1052.8,568.2 C1058.1,571.2 1064.8,575.9 1069.8,580.2 C1074.8,584.5 1078.5,589.4 1082.8,594.2 C1087.1,599.0 1092.8,605.2 1095.8,609.2 C1098.8,613.2 1100.3,616.7 1100.8,618.2 C1101.3,619.7 1099.3,618.7 1098.8,618.2 C1098.3,617.7 1099.8,617.4 1097.8,615.2 C1095.8,613.0 1090.8,608.5 1086.8,605.2 C1082.8,601.9 1078.1,598.2 1073.8,595.2 C1069.5,592.2 1065.5,589.7 1060.8,587.2 C1056.1,584.7 1051.5,582.7 1045.8,580.2 C1040.1,577.7 1033.0,574.5 1026.8,572.2 C1020.6,569.9 1014.8,565.2 1008.8,566.2 C1002.8,567.2 997.1,575.4 990.8,578.2 C984.5,581.0 973.3,585.0 970.8,583.2 C968.3,581.4 969.8,570.9 975.8,567.2Z" fill="#c7ac7d" />
<path d="M1008.8,566.2 C1013.1,563.5 1020.6,569.9 1026.8,572.2 C1033.0,574.5 1040.1,577.7 1045.8,580.2 C1051.5,582.7 1056.1,584.7 1060.8,587.2 C1065.5,589.7 1069.5,592.2 1073.8,595.2 C1078.1,598.2 1082.8,601.9 1086.8,605.2 C1090.8,608.5 1096.0,612.4 1097.8,615.2 C1099.6,618.0 1101.6,619.9 1097.8,622.2 C1094.0,624.5 1081.5,627.0 1074.8,628.8 C1068.1,630.6 1063.5,631.3 1057.8,632.9 C1052.1,634.5 1048.6,639.0 1040.8,638.2 C1033.0,637.4 1017.5,636.5 1010.8,628.2 C1004.1,619.9 1001.1,598.5 1000.8,588.2 C1000.5,577.9 1004.5,568.9 1008.8,566.2Z" fill="#b89d70" />
<path d="M1098.8,622.2 C1098.6,621.2 1081.6,627.4 1074.8,629.2 C1068.0,631.0 1061.8,631.4 1057.8,633.2 C1053.8,635.0 1050.3,635.2 1050.8,640.2 C1051.3,645.2 1057.1,655.2 1060.8,663.2 C1064.5,671.2 1069.2,681.1 1072.8,688.2 C1076.4,695.3 1080.0,698.2 1082.3,705.6 C1084.6,713.0 1086.5,722.2 1086.8,732.6 C1087.0,743.0 1085.1,757.3 1083.8,768.2 C1082.5,779.1 1081.0,789.9 1078.8,798.2 C1076.6,806.5 1074.4,817.4 1070.8,818.2 C1067.2,819.0 1058.3,811.8 1057.3,803.2 C1056.3,794.6 1063.5,784.0 1064.8,766.6 C1066.0,749.2 1066.6,717.4 1064.8,698.6 C1063.0,679.8 1057.5,663.3 1053.8,653.6 C1050.1,643.9 1042.5,642.9 1042.8,640.2 C1043.1,637.5 1050.3,638.0 1055.8,637.2 C1061.3,636.4 1068.6,637.7 1075.8,635.2 C1083.0,632.7 1099.0,623.2 1098.8,622.2Z" fill="url(#gNeck)" />
<path d="M1008.8,566.2 C1011.8,567.2 1020.6,569.9 1026.8,572.2 C1033.0,574.5 1040.1,577.7 1045.8,580.2 C1051.5,582.7 1056.1,584.7 1060.8,587.2 C1065.5,589.7 1069.5,592.2 1073.8,595.2 C1078.1,598.2 1082.8,601.9 1086.8,605.2 C1090.8,608.5 1096.0,613.5 1097.8,615.2" fill="none" stroke="#d8c292" stroke-width="5" stroke-linecap="round" opacity="0.6"/>
<path d="M1008.8,566.2 C1011.8,567.2 1020.6,569.9 1026.8,572.2 C1033.0,574.5 1040.1,577.7 1045.8,580.2 C1051.5,582.7 1056.1,584.7 1060.8,587.2 C1065.5,589.7 1069.5,592.2 1073.8,595.2 C1078.1,598.2 1082.8,601.9 1086.8,605.2 C1090.8,608.5 1096.0,613.5 1097.8,615.2" fill="none" stroke="#ecdcb0" stroke-width="2.2" stroke-linecap="round" opacity="0.85"/>
<path d="M1006.8,561.2 C1006.6,564.0 1005.8,572.0 1005.8,578.2 C1005.8,584.4 1006.5,592.5 1006.8,598.2 C1007.0,603.9 1007.2,609.9 1007.3,612.2" fill="none" stroke="#000" stroke-width="1.6" stroke-linecap="round" />
<path d="M1012.0,744.0 L1019.5,795.4 L1016.0,842.8 L1012.0,850.0 L1012.0,850.0 L1038.0,843.0 L1053.0,823.0 L1054.0,788.0 L1041.0,754.0 L1016.0,740.0Z" fill="url(#gJ5)" />
<path d="M1019.5,737.0 L1045.0,751.6 L1059.7,788.0 L1057.9,824.6 L1041.4,846.5 L1012.0,854.0 L1012.0,850.0 L1038.0,843.0 L1053.0,823.0 L1054.0,788.0 L1041.0,754.0 L1016.0,740.0Z" fill="#c2a777" />
<path d="M1016.0,740.0 C1020.2,742.3 1034.7,746.0 1041.0,754.0 C1047.3,762.0 1052.0,776.5 1054.0,788.0 C1056.0,799.5 1055.7,813.8 1053.0,823.0 C1050.3,832.2 1044.8,838.5 1038.0,843.0 C1031.2,847.5 1016.3,848.8 1012.0,850.0" fill="none" stroke="#000" stroke-width="1.5" stroke-linecap="round" />
<path d="M1019.5,737.0 C1023.8,739.4 1038.3,743.1 1045.0,751.6 C1051.7,760.1 1057.5,775.8 1059.7,788.0 C1061.9,800.2 1061.0,814.9 1057.9,824.6 C1054.9,834.4 1049.1,841.6 1041.4,846.5 C1033.8,851.4 1016.9,852.8 1012.0,854.0" fill="none" stroke="#000" stroke-width="1.6" stroke-linecap="round" />
<path d="M887.7,595.0 C893.2,588.2 903.4,586.0 912.7,583.0 C922.0,580.0 936.4,578.3 943.7,577.0 C951.0,575.7 951.5,574.8 956.7,575.0 C961.9,575.2 969.2,576.5 974.7,578.0 C980.2,579.5 984.4,581.0 989.7,584.0 C995.0,587.0 1001.7,591.7 1006.7,596.0 C1011.7,600.3 1015.4,605.2 1019.7,610.0 C1024.0,614.8 1029.7,621.0 1032.7,625.0 C1035.7,629.0 1036.7,632.0 1037.7,634.0 C1038.7,636.0 1039.5,635.7 1038.7,637.0 C1037.9,638.3 1037.2,640.7 1032.7,642.0 C1028.2,643.3 1018.0,643.5 1011.7,644.6 C1005.4,645.7 999.0,645.9 994.7,648.7 C990.5,651.5 987.2,656.9 986.2,661.3 C985.2,665.7 987.1,670.6 989.0,675.2 C990.9,679.8 994.6,682.5 997.7,689.0 C1000.8,695.5 1005.0,704.8 1007.7,714.0 C1010.4,723.2 1011.9,732.3 1013.7,744.0 C1015.5,755.7 1018.0,773.2 1018.7,784.0 C1019.4,794.8 1018.7,802.0 1017.7,809.0 C1016.7,816.0 1014.4,821.3 1012.7,826.0 C1011.0,830.7 1009.9,833.7 1007.7,837.0 C1005.5,840.3 1003.4,842.5 999.7,846.0 C996.0,849.5 991.2,855.1 985.7,858.0 C980.2,860.9 973.0,863.7 966.7,863.5 C960.4,863.3 954.2,861.7 947.7,856.8 C941.2,851.9 933.5,846.1 927.7,834.0 C921.9,821.9 916.9,802.3 912.7,784.0 C908.5,765.7 906.9,744.0 902.7,724.0 C898.5,704.0 891.5,680.7 887.7,664.0 C883.9,647.3 879.7,635.5 879.7,624.0 C879.7,612.5 882.2,601.8 887.7,595.0Z" fill="url(#gWeb)" />
<path d="M912.7,583.0 C918.7,579.3 936.4,578.3 943.7,577.0 C951.0,575.7 951.5,574.8 956.7,575.0 C961.9,575.2 969.2,576.5 974.7,578.0 C980.2,579.5 984.4,581.0 989.7,584.0 C995.0,587.0 1001.7,591.7 1006.7,596.0 C1011.7,600.3 1015.4,605.2 1019.7,610.0 C1024.0,614.8 1029.7,621.0 1032.7,625.0 C1035.7,629.0 1037.2,632.5 1037.7,634.0 C1038.2,635.5 1036.2,634.5 1035.7,634.0 C1035.2,633.5 1036.7,633.2 1034.7,631.0 C1032.7,628.8 1027.7,624.3 1023.7,621.0 C1019.7,617.7 1015.0,614.0 1010.7,611.0 C1006.4,608.0 1002.4,605.5 997.7,603.0 C993.0,600.5 988.4,598.5 982.7,596.0 C977.0,593.5 969.9,590.3 963.7,588.0 C957.5,585.7 951.7,581.0 945.7,582.0 C939.7,583.0 934.0,591.2 927.7,594.0 C921.4,596.8 910.2,600.8 907.7,599.0 C905.2,597.2 906.7,586.7 912.7,583.0Z" fill="#c7ac7d" />
<path d="M945.7,582.0 C950.0,579.3 957.5,585.7 963.7,588.0 C969.9,590.3 977.0,593.5 982.7,596.0 C988.4,598.5 993.0,600.5 997.7,603.0 C1002.4,605.5 1006.4,608.0 1010.7,611.0 C1015.0,614.0 1019.7,617.7 1023.7,621.0 C1027.7,624.3 1032.9,628.2 1034.7,631.0 C1036.5,633.8 1038.5,635.7 1034.7,638.0 C1030.9,640.3 1018.4,642.8 1011.7,644.6 C1005.0,646.4 1000.4,647.1 994.7,648.7 C989.0,650.3 985.5,654.8 977.7,654.0 C969.9,653.2 954.4,652.3 947.7,644.0 C941.0,635.7 938.0,614.3 937.7,604.0 C937.4,593.7 941.4,584.7 945.7,582.0Z" fill="#b89d70" />
<path d="M1035.7,638.0 C1035.5,637.0 1018.5,643.2 1011.7,645.0 C1004.9,646.8 998.7,647.2 994.7,649.0 C990.7,650.8 987.2,651.0 987.7,656.0 C988.2,661.0 994.0,671.0 997.7,679.0 C1001.4,687.0 1006.1,696.9 1009.7,704.0 C1013.3,711.1 1016.9,714.0 1019.2,721.4 C1021.5,728.8 1023.5,738.0 1023.7,748.4 C1024.0,758.8 1022.0,773.1 1020.7,784.0 C1019.4,794.9 1017.9,805.7 1015.7,814.0 C1013.5,822.3 1011.3,833.2 1007.7,834.0 C1004.1,834.8 995.2,827.6 994.2,819.0 C993.2,810.4 1000.5,799.8 1001.7,782.4 C1003.0,765.0 1003.5,733.2 1001.7,714.4 C999.9,695.6 994.4,679.1 990.7,669.4 C987.0,659.7 979.4,658.7 979.7,656.0 C980.0,653.3 987.2,653.8 992.7,653.0 C998.2,652.2 1005.5,653.5 1012.7,651.0 C1019.9,648.5 1035.9,639.0 1035.7,638.0Z" fill="url(#gNeck)" />
<path d="M945.7,582.0 C948.7,583.0 957.5,585.7 963.7,588.0 C969.9,590.3 977.0,593.5 982.7,596.0 C988.4,598.5 993.0,600.5 997.7,603.0 C1002.4,605.5 1006.4,608.0 1010.7,611.0 C1015.0,614.0 1019.7,617.7 1023.7,621.0 C1027.7,624.3 1032.9,629.3 1034.7,631.0" fill="none" stroke="#d8c292" stroke-width="5" stroke-linecap="round" opacity="0.6"/>
<path d="M945.7,582.0 C948.7,583.0 957.5,585.7 963.7,588.0 C969.9,590.3 977.0,593.5 982.7,596.0 C988.4,598.5 993.0,600.5 997.7,603.0 C1002.4,605.5 1006.4,608.0 1010.7,611.0 C1015.0,614.0 1019.7,617.7 1023.7,621.0 C1027.7,624.3 1032.9,629.3 1034.7,631.0" fill="none" stroke="#ecdcb0" stroke-width="2.2" stroke-linecap="round" opacity="0.85"/>
<path d="M943.7,577.0 C943.5,579.8 942.7,587.8 942.7,594.0 C942.7,600.2 943.5,608.3 943.7,614.0 C944.0,619.7 944.1,625.7 944.2,628.0" fill="none" stroke="#000" stroke-width="1.6" stroke-linecap="round" />
<path d="M923.4,676.8 L938.0,700.0 L948.0,730.0 L950.5,760.0 L946.0,784.0 L946.0,784.0 L971.0,778.0 L985.0,766.0 L991.0,737.0 L989.0,707.0 L977.0,680.0 L957.0,664.0 L923.4,672.0Z" fill="url(#gJ4)" />
<path d="M923.0,668.0 L961.0,660.0 L981.8,676.8 L994.3,706.0 L996.4,737.2 L990.0,768.5 L975.5,781.0 L950.0,788.0 L946.0,784.0 L971.0,778.0 L985.0,766.0 L991.0,737.0 L989.0,707.0 L977.0,680.0 L957.0,664.0 L923.4,672.0Z" fill="#c2a777" />
<path d="M923.4,672.0 C929.0,670.7 948.1,662.7 957.0,664.0 C965.9,665.3 971.7,672.8 977.0,680.0 C982.3,687.2 986.7,697.5 989.0,707.0 C991.3,716.5 991.7,727.2 991.0,737.0 C990.3,746.8 988.3,759.2 985.0,766.0 C981.7,772.8 977.5,775.0 971.0,778.0 C964.5,781.0 950.2,783.0 946.0,784.0" fill="none" stroke="#000" stroke-width="1.5" stroke-linecap="round" />
<path d="M923.0,668.0 C929.3,666.7 951.2,658.5 961.0,660.0 C970.8,661.5 976.2,669.1 981.8,676.8 C987.3,684.5 991.9,695.9 994.3,706.0 C996.7,716.1 997.1,726.8 996.4,737.2 C995.7,747.6 993.5,761.2 990.0,768.5 C986.5,775.8 982.2,777.8 975.5,781.0 C968.8,784.2 954.2,786.8 950.0,788.0" fill="none" stroke="#000" stroke-width="1.6" stroke-linecap="round" />
<path d="M812.6,616.7 C818.1,609.9 828.3,607.7 837.6,604.7 C846.9,601.7 861.3,600.0 868.6,598.7 C875.9,597.4 876.4,596.5 881.6,596.7 C886.8,596.9 894.1,598.2 899.6,599.7 C905.1,601.2 909.3,602.7 914.6,605.7 C919.9,608.7 926.6,613.4 931.6,617.7 C936.6,622.0 940.3,626.9 944.6,631.7 C948.9,636.5 954.6,642.7 957.6,646.7 C960.6,650.7 961.6,653.7 962.6,655.7 C963.6,657.7 964.4,657.4 963.6,658.7 C962.8,660.0 962.1,662.4 957.6,663.7 C953.1,665.0 942.9,665.2 936.6,666.3 C930.3,667.4 923.9,667.6 919.6,670.4 C915.4,673.2 912.1,678.6 911.1,683.0 C910.1,687.4 912.0,692.3 913.9,696.9 C915.8,701.5 919.5,704.2 922.6,710.7 C925.7,717.2 929.9,726.5 932.6,735.7 C935.3,744.9 936.8,754.0 938.6,765.7 C940.4,777.4 942.9,794.9 943.6,805.7 C944.3,816.5 943.6,823.7 942.6,830.7 C941.6,837.7 939.3,843.0 937.6,847.7 C935.9,852.4 934.8,855.4 932.6,858.7 C930.4,862.0 928.3,864.2 924.6,867.7 C920.9,871.2 916.1,876.8 910.6,879.7 C905.1,882.6 897.9,885.4 891.6,885.2 C885.3,885.0 879.1,883.4 872.6,878.5 C866.1,873.6 858.4,867.8 852.6,855.7 C846.8,843.6 841.8,824.0 837.6,805.7 C833.4,787.4 831.8,765.7 827.6,745.7 C823.4,725.7 816.4,702.4 812.6,685.7 C808.8,669.0 804.6,657.2 804.6,645.7 C804.6,634.2 807.1,623.5 812.6,616.7Z" fill="url(#gWeb)" />
<path d="M837.6,604.7 C843.6,601.0 861.3,600.0 868.6,598.7 C875.9,597.4 876.4,596.5 881.6,596.7 C886.8,596.9 894.1,598.2 899.6,599.7 C905.1,601.2 909.3,602.7 914.6,605.7 C919.9,608.7 926.6,613.4 931.6,617.7 C936.6,622.0 940.3,626.9 944.6,631.7 C948.9,636.5 954.6,642.7 957.6,646.7 C960.6,650.7 962.1,654.2 962.6,655.7 C963.1,657.2 961.1,656.2 960.6,655.7 C960.1,655.2 961.6,654.9 959.6,652.7 C957.6,650.5 952.6,646.0 948.6,642.7 C944.6,639.4 939.9,635.7 935.6,632.7 C931.3,629.7 927.3,627.2 922.6,624.7 C917.9,622.2 913.3,620.2 907.6,617.7 C901.9,615.2 894.8,612.0 888.6,609.7 C882.4,607.4 876.6,602.7 870.6,603.7 C864.6,604.7 858.9,612.9 852.6,615.7 C846.3,618.5 835.1,622.5 832.6,620.7 C830.1,618.9 831.6,608.4 837.6,604.7Z" fill="#c7ac7d" />
<path d="M870.6,603.7 C874.9,601.0 882.4,607.4 888.6,609.7 C894.8,612.0 901.9,615.2 907.6,617.7 C913.3,620.2 917.9,622.2 922.6,624.7 C927.3,627.2 931.3,629.7 935.6,632.7 C939.9,635.7 944.6,639.4 948.6,642.7 C952.6,646.0 957.8,649.9 959.6,652.7 C961.4,655.5 963.4,657.4 959.6,659.7 C955.8,662.0 943.3,664.5 936.6,666.3 C929.9,668.1 925.3,668.8 919.6,670.4 C913.9,672.0 910.4,676.5 902.6,675.7 C894.8,674.9 879.3,674.0 872.6,665.7 C865.9,657.4 862.9,636.0 862.6,625.7 C862.3,615.4 866.3,606.4 870.6,603.7Z" fill="#b89d70" />
<path d="M960.6,659.7 C960.4,658.7 943.4,664.9 936.6,666.7 C929.8,668.5 923.6,668.9 919.6,670.7 C915.6,672.5 912.1,672.7 912.6,677.7 C913.1,682.7 918.9,692.7 922.6,700.7 C926.3,708.7 931.0,718.6 934.6,725.7 C938.2,732.8 941.8,735.7 944.1,743.1 C946.4,750.5 948.4,759.7 948.6,770.1 C948.9,780.5 946.9,794.8 945.6,805.7 C944.3,816.6 942.8,827.4 940.6,835.7 C938.4,844.0 936.2,854.9 932.6,855.7 C929.0,856.5 920.1,849.3 919.1,840.7 C918.1,832.1 925.4,821.5 926.6,804.1 C927.9,786.7 928.4,754.9 926.6,736.1 C924.8,717.3 919.3,700.8 915.6,691.1 C911.9,681.4 904.3,680.4 904.6,677.7 C904.9,675.0 912.1,675.5 917.6,674.7 C923.1,673.9 930.4,675.2 937.6,672.7 C944.8,670.2 960.8,660.7 960.6,659.7Z" fill="url(#gNeck)" />
<path d="M870.6,603.7 C873.6,604.7 882.4,607.4 888.6,609.7 C894.8,612.0 901.9,615.2 907.6,617.7 C913.3,620.2 917.9,622.2 922.6,624.7 C927.3,627.2 931.3,629.7 935.6,632.7 C939.9,635.7 944.6,639.4 948.6,642.7 C952.6,646.0 957.8,651.0 959.6,652.7" fill="none" stroke="#d8c292" stroke-width="5" stroke-linecap="round" opacity="0.6"/>
<path d="M870.6,603.7 C873.6,604.7 882.4,607.4 888.6,609.7 C894.8,612.0 901.9,615.2 907.6,617.7 C913.3,620.2 917.9,622.2 922.6,624.7 C927.3,627.2 931.3,629.7 935.6,632.7 C939.9,635.7 944.6,639.4 948.6,642.7 C952.6,646.0 957.8,651.0 959.6,652.7" fill="none" stroke="#ecdcb0" stroke-width="2.2" stroke-linecap="round" opacity="0.85"/>
<path d="M868.6,598.7 C868.4,601.5 867.6,609.5 867.6,615.7 C867.6,621.9 868.4,630.0 868.6,635.7 C868.9,641.4 869.0,647.4 869.1,649.7" fill="none" stroke="#000" stroke-width="1.6" stroke-linecap="round" />
<path d="M879.6,772.4 L882.4,794.6 L882.4,836.3 L876.8,878.0 L871.3,889.0 L872.0,886.0 L893.0,883.0 L908.0,871.0 L915.5,845.0 L913.0,817.0 L901.0,791.0 L879.6,775.0Z" fill="url(#gJ3)" />
<path d="M879.6,771.0 L904.6,789.0 L918.5,816.8 L921.0,844.6 L913.0,872.4 L896.3,886.3 L874.0,889.0 L872.0,886.0 L893.0,883.0 L908.0,871.0 L915.5,845.0 L913.0,817.0 L901.0,791.0 L879.6,775.0Z" fill="#c2a777" />
<path d="M879.6,775.0 C883.2,777.7 895.4,784.0 901.0,791.0 C906.6,798.0 910.6,808.0 913.0,817.0 C915.4,826.0 916.3,836.0 915.5,845.0 C914.7,854.0 911.8,864.7 908.0,871.0 C904.2,877.3 899.0,880.5 893.0,883.0 C887.0,885.5 875.5,885.5 872.0,886.0" fill="none" stroke="#000" stroke-width="1.5" stroke-linecap="round" />
<path d="M879.6,771.0 C883.8,774.0 898.1,781.4 904.6,789.0 C911.1,796.6 915.8,807.5 918.5,816.8 C921.2,826.1 921.9,835.3 921.0,844.6 C920.1,853.9 917.1,865.5 913.0,872.4 C908.9,879.3 902.8,883.5 896.3,886.3 C889.8,889.1 877.7,888.5 874.0,889.0" fill="none" stroke="#000" stroke-width="1.6" stroke-linecap="round" />
<path d="M750.5,633.6 C756.0,626.8 766.2,624.6 775.5,621.6 C784.8,618.6 799.2,616.9 806.5,615.6 C813.8,614.3 814.3,613.4 819.5,613.6 C824.7,613.8 832.0,615.1 837.5,616.6 C843.0,618.1 847.2,619.6 852.5,622.6 C857.8,625.6 864.5,630.3 869.5,634.6 C874.5,638.9 878.2,643.8 882.5,648.6 C886.8,653.4 892.5,659.6 895.5,663.6 C898.5,667.6 899.5,670.6 900.5,672.6 C901.5,674.6 902.3,674.3 901.5,675.6 C900.7,676.9 900.0,679.3 895.5,680.6 C891.0,681.9 880.8,682.1 874.5,683.2 C868.2,684.3 861.8,684.5 857.5,687.3 C853.2,690.1 850.0,695.5 849.0,699.9 C848.0,704.3 849.9,709.2 851.8,713.8 C853.7,718.4 857.4,721.1 860.5,727.6 C863.6,734.1 867.8,743.4 870.5,752.6 C873.2,761.8 874.7,770.9 876.5,782.6 C878.3,794.3 880.8,811.8 881.5,822.6 C882.2,833.4 881.5,840.6 880.5,847.6 C879.5,854.6 877.2,859.9 875.5,864.6 C873.8,869.3 872.7,872.3 870.5,875.6 C868.3,878.9 866.2,881.1 862.5,884.6 C858.8,888.1 854.0,893.7 848.5,896.6 C843.0,899.5 835.8,902.3 829.5,902.1 C823.2,901.9 817.0,900.3 810.5,895.4 C804.0,890.5 796.3,884.7 790.5,872.6 C784.7,860.5 779.7,840.9 775.5,822.6 C771.3,804.3 769.7,782.6 765.5,762.6 C761.3,742.6 754.3,719.3 750.5,702.6 C746.7,685.9 742.5,674.1 742.5,662.6 C742.5,651.1 745.0,640.4 750.5,633.6Z" fill="url(#gWeb)" />
<path d="M775.5,621.6 C781.5,617.9 799.2,616.9 806.5,615.6 C813.8,614.3 814.3,613.4 819.5,613.6 C824.7,613.8 832.0,615.1 837.5,616.6 C843.0,618.1 847.2,619.6 852.5,622.6 C857.8,625.6 864.5,630.3 869.5,634.6 C874.5,638.9 878.2,643.8 882.5,648.6 C886.8,653.4 892.5,659.6 895.5,663.6 C898.5,667.6 900.0,671.1 900.5,672.6 C901.0,674.1 899.0,673.1 898.5,672.6 C898.0,672.1 899.5,671.8 897.5,669.6 C895.5,667.4 890.5,662.9 886.5,659.6 C882.5,656.3 877.8,652.6 873.5,649.6 C869.2,646.6 865.2,644.1 860.5,641.6 C855.8,639.1 851.2,637.1 845.5,634.6 C839.8,632.1 832.7,628.9 826.5,626.6 C820.3,624.3 814.5,619.6 808.5,620.6 C802.5,621.6 796.8,629.8 790.5,632.6 C784.2,635.4 773.0,639.4 770.5,637.6 C768.0,635.8 769.5,625.3 775.5,621.6Z" fill="#c7ac7d" />
<path d="M808.5,620.6 C812.8,617.9 820.3,624.3 826.5,626.6 C832.7,628.9 839.8,632.1 845.5,634.6 C851.2,637.1 855.8,639.1 860.5,641.6 C865.2,644.1 869.2,646.6 873.5,649.6 C877.8,652.6 882.5,656.3 886.5,659.6 C890.5,662.9 895.7,666.8 897.5,669.6 C899.3,672.4 901.3,674.3 897.5,676.6 C893.7,678.9 881.2,681.4 874.5,683.2 C867.8,685.0 863.2,685.7 857.5,687.3 C851.8,688.9 848.3,693.4 840.5,692.6 C832.7,691.8 817.2,690.9 810.5,682.6 C803.8,674.3 800.8,652.9 800.5,642.6 C800.2,632.3 804.2,623.3 808.5,620.6Z" fill="#b89d70" />
<path d="M898.5,676.6 C898.3,675.6 881.3,681.8 874.5,683.6 C867.7,685.4 861.5,685.8 857.5,687.6 C853.5,689.4 850.0,689.6 850.5,694.6 C851.0,699.6 856.8,709.6 860.5,717.6 C864.2,725.6 868.9,735.5 872.5,742.6 C876.1,749.7 879.7,752.6 882.0,760.0 C884.3,767.4 886.2,776.6 886.5,787.0 C886.8,797.4 884.8,811.7 883.5,822.6 C882.2,833.5 880.7,844.3 878.5,852.6 C876.3,860.9 874.1,871.8 870.5,872.6 C866.9,873.4 858.0,866.2 857.0,857.6 C856.0,849.0 863.2,838.4 864.5,821.0 C865.8,803.6 866.3,771.8 864.5,753.0 C862.7,734.2 857.2,717.7 853.5,708.0 C849.8,698.3 842.2,697.3 842.5,694.6 C842.8,691.9 850.0,692.4 855.5,691.6 C861.0,690.8 868.3,692.1 875.5,689.6 C882.7,687.1 898.7,677.6 898.5,676.6Z" fill="url(#gNeck)" />
<path d="M808.5,620.6 C811.5,621.6 820.3,624.3 826.5,626.6 C832.7,628.9 839.8,632.1 845.5,634.6 C851.2,637.1 855.8,639.1 860.5,641.6 C865.2,644.1 869.2,646.6 873.5,649.6 C877.8,652.6 882.5,656.3 886.5,659.6 C890.5,662.9 895.7,667.9 897.5,669.6" fill="none" stroke="#d8c292" stroke-width="5" stroke-linecap="round" opacity="0.6"/>
<path d="M808.5,620.6 C811.5,621.6 820.3,624.3 826.5,626.6 C832.7,628.9 839.8,632.1 845.5,634.6 C851.2,637.1 855.8,639.1 860.5,641.6 C865.2,644.1 869.2,646.6 873.5,649.6 C877.8,652.6 882.5,656.3 886.5,659.6 C890.5,662.9 895.7,667.9 897.5,669.6" fill="none" stroke="#ecdcb0" stroke-width="2.2" stroke-linecap="round" opacity="0.85"/>
<path d="M806.5,615.6 C806.3,618.4 805.5,626.4 805.5,632.6 C805.5,638.8 806.2,646.9 806.5,652.6 C806.8,658.3 806.9,664.3 807.0,666.6" fill="none" stroke="#000" stroke-width="1.6" stroke-linecap="round" />
<path d="M801.4,687.6 L803.5,689.7 L811.8,716.8 L814.0,746.0 L811.8,766.8 L807.7,798.0 L801.4,821.0 L803.5,823.0 L803.5,823.0 L824.3,819.0 L841.0,808.5 L851.4,787.7 L853.5,756.4 L849.4,729.3 L836.8,706.3 L820.0,693.8 L801.4,687.6Z" fill="url(#gJ2)" />
<path d="M801.4,683.4 L826.4,689.7 L845.2,704.3 L855.6,725.0 L860.0,756.0 L857.0,787.0 L846.0,810.0 L826.0,824.0 L803.0,828.0 L803.5,823.0 L824.3,819.0 L841.0,808.5 L851.4,787.7 L853.5,756.4 L849.4,729.3 L836.8,706.3 L820.0,693.8 L801.4,687.6Z" fill="#c2a777" />
<path d="M801.4,687.6 C804.5,688.6 814.1,690.7 820.0,693.8 C825.9,696.9 831.9,700.4 836.8,706.3 C841.7,712.2 846.6,720.9 849.4,729.3 C852.2,737.6 853.2,746.7 853.5,756.4 C853.8,766.1 853.5,779.0 851.4,787.7 C849.3,796.4 845.5,803.3 841.0,808.5 C836.5,813.7 830.5,816.6 824.3,819.0 C818.0,821.4 807.0,822.3 803.5,823.0" fill="none" stroke="#000" stroke-width="1.5" stroke-linecap="round" />
<path d="M801.4,683.4 C805.6,684.5 819.1,686.2 826.4,689.7 C833.7,693.2 840.3,698.4 845.2,704.3 C850.1,710.2 853.1,716.4 855.6,725.0 C858.1,733.6 859.8,745.7 860.0,756.0 C860.2,766.3 859.3,778.0 857.0,787.0 C854.7,796.0 851.2,803.8 846.0,810.0 C840.8,816.2 833.2,821.0 826.0,824.0 C818.8,827.0 806.8,827.3 803.0,828.0" fill="none" stroke="#000" stroke-width="1.6" stroke-linecap="round" />
<path d="M682.0,713.5 C684.5,691.8 688.3,666.3 692.0,653.5 C695.7,640.7 699.0,642.0 704.0,636.5 C709.0,631.0 715.5,624.2 722.0,620.5 C728.5,616.8 736.7,615.0 743.0,614.5 C749.3,614.0 754.3,615.3 760.0,617.5 C765.7,619.7 772.5,623.5 777.0,627.5 C781.5,631.5 783.5,634.7 787.0,641.5 C790.5,648.3 794.5,659.0 798.0,668.5 C801.5,678.0 805.7,689.3 808.0,698.5 C810.3,707.7 811.5,714.3 812.0,723.5 C812.5,732.7 812.0,743.5 811.0,753.5 C810.0,763.5 808.5,773.5 806.0,783.5 C803.5,793.5 800.5,806.2 796.0,813.5 C791.5,820.8 780.5,823.2 779.0,827.5 C777.5,831.8 784.0,835.7 787.0,839.5 C790.0,843.3 793.2,847.5 797.0,850.5 C800.8,853.5 805.8,855.8 810.0,857.5 C814.2,859.2 818.3,859.5 822.0,860.5 C825.7,861.5 830.7,861.8 832.0,863.5 C833.3,865.2 831.3,868.3 830.0,870.5 C828.7,872.7 827.5,873.5 824.0,876.5 C820.5,879.5 815.3,885.0 809.0,888.5 C802.7,892.0 794.7,894.7 786.0,897.5 C777.3,900.3 765.0,903.8 757.0,905.5 C749.0,907.2 744.3,907.5 738.0,907.5 C731.7,907.5 725.8,907.8 719.0,905.5 C712.2,903.2 703.2,900.5 697.0,893.5 C690.8,886.5 685.3,881.8 682.0,863.5 C678.7,845.2 677.0,808.5 677.0,783.5 C677.0,758.5 679.5,735.2 682.0,713.5Z" fill="url(#gWeb)" />
<path d="M787.0,641.5 C793.3,645.3 794.5,659.0 798.0,668.5 C801.5,678.0 805.7,689.3 808.0,698.5 C810.3,707.7 811.5,714.3 812.0,723.5 C812.5,732.7 812.0,743.5 811.0,753.5 C810.0,763.5 808.5,773.5 806.0,783.5 C803.5,793.5 800.5,806.2 796.0,813.5 C791.5,820.8 783.3,829.2 779.0,827.5 C774.7,825.8 770.8,815.8 770.0,803.5 C769.2,791.2 773.7,768.5 774.0,753.5 C774.3,738.5 773.3,727.7 772.0,713.5 C770.7,699.3 768.0,679.8 766.0,668.5 C764.0,657.2 756.5,650.0 760.0,645.5 C763.5,641.0 780.7,637.7 787.0,641.5Z" fill="url(#gSide2)" />
<path d="M796.0,813.5 C795.5,820.8 784.2,825.2 779.0,827.5 C773.8,829.8 768.2,832.5 765.0,827.5 C761.8,822.5 762.2,806.5 760.0,797.5 C757.8,788.5 751.0,779.2 752.0,773.5 C753.0,767.8 761.0,761.8 766.0,763.5 C771.0,765.2 777.0,775.2 782.0,783.5 C787.0,791.8 796.5,806.2 796.0,813.5Z" fill="#9c8560" opacity="0.7"/>
<path d="M833.0,865.5 C834.3,865.7 831.5,870.3 830.0,872.5 C828.5,874.7 827.5,875.5 824.0,878.5 C820.5,881.5 815.3,887.0 809.0,890.5 C802.7,894.0 794.7,896.7 786.0,899.5 C777.3,902.3 765.0,905.8 757.0,907.5 C749.0,909.2 741.3,910.2 738.0,909.5 C734.7,908.8 733.8,905.0 737.0,903.5 C740.2,902.0 748.8,902.5 757.0,900.5 C765.2,898.5 777.5,894.5 786.0,891.5 C794.5,888.5 802.0,885.8 808.0,882.5 C814.0,879.2 817.8,874.3 822.0,871.5 C826.2,868.7 831.7,865.3 833.0,865.5Z" fill="#a08962" opacity="0.8"/>
<path d="M760.0,797.5 C760.8,802.5 762.2,819.7 765.0,827.5 C767.8,835.3 771.7,840.0 777.0,844.5 C782.3,849.0 789.8,852.0 797.0,854.5 C804.2,857.0 814.7,858.2 820.0,859.5 C825.3,860.8 827.5,862.0 829.0,862.5" fill="none" stroke="#d8c292" stroke-width="5" stroke-linecap="round" opacity="0.6"/>
<path d="M760.0,797.5 C760.8,802.5 762.2,819.7 765.0,827.5 C767.8,835.3 771.7,840.0 777.0,844.5 C782.3,849.0 789.8,852.0 797.0,854.5 C804.2,857.0 814.7,858.2 820.0,859.5 C825.3,860.8 827.5,862.0 829.0,862.5" fill="none" stroke="#ecdcb0" stroke-width="2.2" stroke-linecap="round" opacity="0.85"/>
<path d="M743.0,614.5 C742.3,618.5 740.7,630.3 739.0,638.5 C737.3,646.7 734.7,656.0 733.0,663.5 C731.3,671.0 729.7,680.2 729.0,683.5" fill="none" stroke="#000" stroke-width="1.6" stroke-linecap="round" />
<path d="M693.0,634.0 L707.6,641.7 L718.0,662.6 L726.3,687.6 L732.6,716.8 L736.8,741.8 L728.0,767.0 L720.0,788.0 L714.0,808.0 L722.0,808.0 L733.0,788.0 L741.0,767.0 L745.0,746.0 L745.0,738.0 L753.0,733.0 L764.0,715.0 L766.0,688.0 L753.0,658.0 L730.0,637.0 L703.0,631.0Z" fill="url(#gJ1)" />
<path d="M695.0,631.0 L722.0,621.0 L745.0,629.0 L766.0,652.0 L775.3,683.0 L775.3,704.0 L768.0,725.0 L753.0,738.0 L743.0,740.0 L745.0,738.0 L753.0,733.0 L764.0,715.0 L766.0,688.0 L753.0,658.0 L730.0,637.0 L703.0,631.0Z" fill="#c2a777" />
<path d="M703.0,631.0 C707.5,632.0 721.7,632.5 730.0,637.0 C738.3,641.5 747.0,649.5 753.0,658.0 C759.0,666.5 764.2,678.5 766.0,688.0 C767.8,697.5 766.2,707.5 764.0,715.0 C761.8,722.5 756.2,729.2 753.0,733.0 C749.8,736.8 746.3,737.2 745.0,738.0" fill="none" stroke="#000" stroke-width="1.5" stroke-linecap="round" />
<path d="M695.0,631.0 C699.5,629.3 713.7,621.3 722.0,621.0 C730.3,620.7 737.7,623.8 745.0,629.0 C752.3,634.2 761.0,643.0 766.0,652.0 C771.0,661.0 773.8,674.3 775.3,683.0 C776.8,691.7 776.5,697.0 775.3,704.0 C774.1,711.0 771.7,719.3 768.0,725.0 C764.3,730.7 757.2,735.5 753.0,738.0 C748.8,740.5 744.7,739.7 743.0,740.0" fill="none" stroke="#000" stroke-width="1.6" stroke-linecap="round" />
<path d="M618.8,730.0 C621.3,708.3 625.1,682.8 628.8,670.0 C632.5,657.2 635.8,658.5 640.8,653.0 C645.8,647.5 652.3,640.7 658.8,637.0 C665.3,633.3 673.6,631.7 679.8,631.0 C686.0,630.3 689.3,629.0 695.8,633.0 C702.3,637.0 712.6,647.7 718.8,655.0 C725.0,662.3 729.8,668.0 732.8,677.0 C735.8,686.0 735.5,696.8 736.8,709.0 C738.1,721.2 740.8,736.5 740.8,750.0 C740.8,763.5 739.1,778.7 736.8,790.0 C734.5,801.3 730.3,809.0 726.8,818.0 C723.3,827.0 716.3,837.7 715.8,844.0 C715.3,850.3 720.8,852.2 723.8,856.0 C726.8,859.8 730.0,864.0 733.8,867.0 C737.6,870.0 742.6,872.3 746.8,874.0 C751.0,875.7 755.1,876.0 758.8,877.0 C762.5,878.0 767.5,878.3 768.8,880.0 C770.1,881.7 768.1,884.8 766.8,887.0 C765.5,889.2 764.3,890.0 760.8,893.0 C757.3,896.0 752.1,901.5 745.8,905.0 C739.5,908.5 731.5,911.2 722.8,914.0 C714.1,916.8 701.8,920.3 693.8,922.0 C685.8,923.7 681.1,924.0 674.8,924.0 C668.5,924.0 662.6,924.3 655.8,922.0 C649.0,919.7 640.0,917.0 633.8,910.0 C627.6,903.0 622.1,898.3 618.8,880.0 C615.5,861.7 613.8,825.0 613.8,800.0 C613.8,775.0 616.3,751.7 618.8,730.0Z" fill="url(#gWeb)" />
<path d="M732.8,677.0 C735.5,679.3 735.5,696.8 736.8,709.0 C738.1,721.2 740.8,736.5 740.8,750.0 C740.8,763.5 739.1,778.7 736.8,790.0 C734.5,801.3 730.3,809.0 726.8,818.0 C723.3,827.0 718.8,843.7 715.8,844.0 C712.8,844.3 709.1,832.3 708.8,820.0 C708.5,807.7 712.5,785.0 713.8,770.0 C715.1,755.0 715.6,742.5 716.8,730.0 C718.0,717.5 718.1,703.8 720.8,695.0 C723.5,686.2 730.1,674.7 732.8,677.0Z" fill="url(#gSide2)" />
<path d="M769.8,882.0 C771.1,882.2 768.3,886.8 766.8,889.0 C765.3,891.2 764.3,892.0 760.8,895.0 C757.3,898.0 752.1,903.5 745.8,907.0 C739.5,910.5 731.5,913.2 722.8,916.0 C714.1,918.8 701.8,922.3 693.8,924.0 C685.8,925.7 678.1,926.7 674.8,926.0 C671.5,925.3 670.6,921.5 673.8,920.0 C677.0,918.5 685.6,919.0 693.8,917.0 C702.0,915.0 714.3,911.0 722.8,908.0 C731.3,905.0 738.8,902.3 744.8,899.0 C750.8,895.7 754.6,890.8 758.8,888.0 C763.0,885.2 768.5,881.8 769.8,882.0Z" fill="#a08962" opacity="0.8"/>
<path d="M696.8,814.0 C697.6,819.0 699.0,836.2 701.8,844.0 C704.6,851.8 708.5,856.5 713.8,861.0 C719.1,865.5 726.6,868.5 733.8,871.0 C741.0,873.5 751.5,874.7 756.8,876.0 C762.1,877.3 764.3,878.5 765.8,879.0" fill="none" stroke="#d8c292" stroke-width="5" stroke-linecap="round" opacity="0.6"/>
<path d="M696.8,814.0 C697.6,819.0 699.0,836.2 701.8,844.0 C704.6,851.8 708.5,856.5 713.8,861.0 C719.1,865.5 726.6,868.5 733.8,871.0 C741.0,873.5 751.5,874.7 756.8,876.0 C762.1,877.3 764.3,878.5 765.8,879.0" fill="none" stroke="#ecdcb0" stroke-width="2.2" stroke-linecap="round" opacity="0.85"/>
<path d="M679.8,631.0 C679.1,635.0 677.5,646.8 675.8,655.0 C674.1,663.2 671.5,672.5 669.8,680.0 C668.1,687.5 666.5,696.7 665.8,700.0" fill="none" stroke="#000" stroke-width="1.6" stroke-linecap="round" />
<path d="M696.0,633.0 C699.3,635.5 709.5,640.7 716.0,648.0 C722.5,655.3 731.5,666.8 735.0,677.0 C738.5,687.2 736.7,703.7 737.0,709.0" fill="none" stroke="#000" stroke-width="1.5" stroke-linecap="round" />
<path d="M811.0,716.0 C811.5,721.0 813.8,735.3 814.0,746.0 C814.2,756.7 813.0,770.2 812.0,780.0 C811.0,789.8 808.7,800.8 808.0,805.0" fill="none" stroke="#000" stroke-width="1.5" stroke-linecap="round" />
<path d="M880.0,774.0 C880.3,777.5 881.7,784.7 882.0,795.0 C882.3,805.3 882.8,822.2 882.0,836.0 C881.2,849.8 877.8,871.0 877.0,878.0" fill="none" stroke="#000" stroke-width="1.5" stroke-linecap="round" />
<path d="M925.5,678.8 C928.2,681.7 937.8,689.7 942.0,696.0 C946.2,702.3 949.1,707.1 950.5,716.4 C951.9,725.7 950.5,745.9 950.5,751.8" fill="none" stroke="#000" stroke-width="1.5" stroke-linecap="round" />
<path d="M1020.6,797.8 C1020.7,800.7 1020.9,809.0 1021.0,815.0 C1021.1,821.0 1021.3,830.7 1021.4,833.8" fill="none" stroke="#000" stroke-width="1.5" stroke-linecap="round" />
<path d="M1060.8,637.3 C1063.7,641.1 1073.3,651.0 1078.0,660.0 C1082.7,669.0 1086.9,685.8 1088.7,691.0" fill="none" stroke="#000" stroke-width="1.5" stroke-linecap="round" />
<path d="M1227.0,640.0 C1227.3,643.8 1229.2,654.7 1228.6,662.5 C1228.0,670.3 1225.7,680.7 1223.4,686.8 C1221.1,692.9 1217.9,695.5 1215.0,699.0 C1212.1,702.5 1207.5,706.2 1206.0,707.7" fill="none" stroke="#000" stroke-width="1.6" stroke-linecap="round" />
<path d="M735.0,792.0 C735.2,798.3 735.5,818.2 736.0,830.0 C736.5,841.8 737.7,857.5 738.0,863.0" fill="none" stroke="#000" stroke-width="1.5" stroke-linecap="round" />
<path d="M809.0,828.0 C810.8,834.2 816.0,852.8 820.0,865.0 C824.0,877.2 830.8,895.0 833.0,901.0" fill="none" stroke="#000" stroke-width="1.5" stroke-linecap="round" />
<path d="M951.6,811.0 C953.0,815.3 957.1,828.4 960.0,837.0 C962.9,845.6 967.3,858.2 968.8,862.5" fill="none" stroke="#000" stroke-width="1.5" stroke-linecap="round" />
<path d="M1091.0,700.0 C1091.2,710.0 1091.7,741.5 1092.0,760.0 C1092.3,778.5 1092.8,802.5 1093.0,811.0" fill="none" stroke="#000" stroke-width="1.5" stroke-linecap="round" />
<path d="M1152.0,676.0 C1152.2,682.5 1152.7,702.7 1153.0,715.0 C1153.3,727.3 1153.8,744.2 1154.0,750.0" fill="none" stroke="#000" stroke-width="1.5" stroke-linecap="round" />
<path d="M903.6,701.8 L934.9,704.3 L936.3,743.0 L904.6,740.4 L903.6,701.8" fill="none" stroke="#000" stroke-width="1.3" stroke-linejoin="round" stroke-linecap="round" />
<path d="M430.3,796.5 L430.5,789.9 L430.8,783.4 L431.4,776.9 L432.2,770.5 L433.2,764.1 L434.4,757.9 L435.9,751.7 L437.5,745.6 L439.3,739.6 L441.3,733.7 L443.5,728.0 L445.9,722.4 L448.5,716.9 L451.2,711.6 L454.2,706.4 L457.3,701.4 L460.6,696.6 L464.0,692.0 L467.6,687.5 L471.4,683.3 L475.3,679.2 L479.3,675.4 L483.5,671.8 L487.8,668.4 L492.2,665.2 L496.8,662.2 L501.4,659.5 L506.2,657.1 L511.0,654.8 L515.9,652.9 L520.9,651.1 L526.0,649.6 L545.5,644.9 L550.7,643.7 L555.9,642.8 L561.1,642.0 L566.4,641.6 L571.7,641.4 L577.0,641.5 L582.3,641.8 L587.7,642.4 L593.0,643.2 L598.4,644.3 L603.7,645.7 L609.0,647.3 L614.2,649.1 L619.5,651.2 L624.6,653.6 L629.7,656.2 L634.7,659.0 L639.7,662.1 L644.6,665.4 L649.4,668.9 L654.0,672.6 L658.6,676.6 L663.1,680.7 L667.4,685.1 L671.7,689.6 L675.8,694.4 L679.7,699.3 L683.5,704.4 L687.2,709.6 L690.7,715.0 L694.0,720.5 L697.2,726.2 L700.2,732.0 L703.0,738.0 L705.7,744.0 L708.1,750.1 L710.4,756.4 L712.5,762.7 L714.4,769.1 L716.1,775.5 L717.6,782.0 L718.9,788.6 L719.9,795.2 L720.8,801.8 L721.5,808.4 L721.9,815.0 L722.2,821.6 L722.2,828.2 L722.0,834.8 L721.7,841.3 L721.1,847.8 L720.3,854.2 L719.3,860.6 L718.1,866.9 L716.6,873.0 L715.0,879.1 L713.2,885.1 L711.2,891.0 L709.0,896.7 L706.6,902.3 L704.0,907.8 L701.3,913.1 L698.3,918.3 L695.2,923.3 L691.9,928.1 L688.5,932.7 L684.9,937.2 L681.1,941.4 L677.2,945.5 L673.2,949.3 L669.0,952.9 L664.7,956.3 L660.3,959.5 L655.7,962.5 L651.1,965.2 L646.3,967.6 L641.5,969.9 L636.6,971.9 L631.6,973.6 L626.5,975.1 L607.0,979.8 L601.8,981.0 L596.6,982.0 L591.4,982.7 L586.1,983.1 L580.8,983.3 L575.5,983.2 L570.2,982.9 L564.8,982.3 L559.5,981.5 L554.1,980.4 L548.8,979.0 L543.5,977.4 L538.3,975.6 L533.0,973.5 L527.9,971.1 L522.8,968.5 L517.8,965.7 L512.8,962.6 L507.9,959.3 L503.1,955.8 L498.5,952.0 L493.9,948.1 L489.4,944.0 L485.1,939.6 L480.8,935.1 L476.8,930.3 L472.8,925.4 L469.0,920.4 L465.3,915.1 L461.8,909.7 L458.5,904.2 L455.3,898.5 L452.3,892.7 L449.5,886.8 L446.8,880.7 L444.4,874.6 L442.1,868.3 L440.0,862.0 L438.1,855.6 L436.4,849.2 L434.9,842.7 L433.6,836.1 L432.6,829.5 L431.7,822.9 L431.0,816.3 L430.6,809.7 L430.3,803.1Z" fill="url(#gRim)" stroke="#000" stroke-width="2"/>
<ellipse cx="575" cy="812.5" rx="134.5" ry="170" transform="rotate(-12 575 812.5)" fill="none" stroke="#000" stroke-width="1.2"/>
<ellipse cx="571" cy="813.5" rx="134.5" ry="170" transform="rotate(-12 571 813.5)" fill="none" stroke="#c8ae80" stroke-width="2.5"/>
<ellipse cx="566.5" cy="814.7" rx="134.5" ry="170" transform="rotate(-12 566.5 814.7)" fill="#bea274" stroke="#000" stroke-width="1.6"/>
<ellipse cx="566.5" cy="814.7" rx="130" ry="165.5" transform="rotate(-12 566.5 814.7)" fill="none" stroke="#d0b688" stroke-width="2"/>
<ellipse cx="566.5" cy="814.7" rx="128" ry="163" transform="rotate(-12 566.5 814.7)" fill="none" stroke="#000" stroke-width="1.2"/>
<ellipse cx="559" cy="700" rx="8.5" ry="10.5" fill="url(#gH)" stroke="#000" stroke-width="1.6"/>
<ellipse cx="512" cy="711" rx="8.5" ry="10.5" fill="url(#gH)" stroke="#000" stroke-width="1.6"/>
<ellipse cx="607.7" cy="720.6" rx="8.5" ry="10.5" fill="url(#gH)" stroke="#000" stroke-width="1.6"/>
<ellipse cx="479" cy="751" rx="8.5" ry="10.5" fill="url(#gH)" stroke="#000" stroke-width="1.6"/>
<ellipse cx="645" cy="768.5" rx="8.5" ry="10.5" fill="url(#gH)" stroke="#000" stroke-width="1.6"/>
<ellipse cx="468.7" cy="809" rx="8.5" ry="10.5" fill="url(#gH)" stroke="#000" stroke-width="1.6"/>
<ellipse cx="660" cy="828.7" rx="8.5" ry="10.5" fill="url(#gH)" stroke="#000" stroke-width="1.6"/>
<ellipse cx="484" cy="870" rx="8.5" ry="10.5" fill="url(#gH)" stroke="#000" stroke-width="1.6"/>
<ellipse cx="650" cy="887" rx="8.5" ry="10.5" fill="url(#gH)" stroke="#000" stroke-width="1.6"/>
<ellipse cx="520.8" cy="917" rx="8.5" ry="10.5" fill="url(#gH)" stroke="#000" stroke-width="1.6"/>
<ellipse cx="616" cy="927" rx="8.5" ry="10.5" fill="url(#gH)" stroke="#000" stroke-width="1.6"/>
<ellipse cx="569" cy="939" rx="8.5" ry="10.5" fill="url(#gH)" stroke="#000" stroke-width="1.6"/>
<path d="M485.6,828.2 L485.7,824.8 L486.0,821.4 L486.5,818.1 L487.2,814.9 L488.1,811.8 L489.3,808.7 L490.6,805.9 L492.2,803.1 L493.9,800.6 L495.8,798.2 L497.9,796.0 L500.1,794.1 L502.4,792.4 L504.9,790.9 L507.5,789.7 L510.1,788.7 L512.9,788.0 L555.9,777.0 L558.6,776.5 L561.5,776.3 L564.3,776.4 L567.2,776.8 L570.0,777.4 L572.8,778.2 L575.6,779.4 L578.3,780.8 L580.9,782.4 L583.4,784.3 L585.8,786.4 L588.1,788.6 L590.2,791.1 L592.2,793.8 L594.0,796.6 L595.7,799.6 L597.1,802.7 L598.4,805.9 L599.4,809.2 L600.2,812.5 L600.8,815.9 L601.2,819.3 L601.4,822.8 L601.3,826.2 L601.0,829.6 L600.5,832.9 L599.8,836.1 L598.9,839.2 L597.7,842.3 L596.4,845.1 L594.8,847.9 L593.1,850.4 L591.2,852.8 L589.1,855.0 L586.9,856.9 L584.6,858.6 L582.1,860.1 L579.5,861.3 L576.9,862.3 L574.1,863.0 L531.1,874.0 L528.4,874.5 L525.5,874.7 L522.7,874.6 L519.8,874.2 L517.0,873.6 L514.2,872.8 L511.4,871.6 L508.7,870.2 L506.1,868.6 L503.6,866.7 L501.2,864.6 L498.9,862.4 L496.8,859.9 L494.8,857.2 L493.0,854.4 L491.3,851.4 L489.9,848.3 L488.6,845.1 L487.6,841.8 L486.8,838.5 L486.2,835.1 L485.8,831.7Z" fill="url(#gHub)" stroke="#000" stroke-width="1.5"/>
<ellipse cx="522" cy="831" rx="36" ry="44" transform="rotate(-12 522 831)" fill="#bba072" stroke="#000" stroke-width="1.5"/>
<ellipse cx="522" cy="831" rx="30" ry="37" transform="rotate(-12 522 831)" fill="#c8ad7e" stroke="#000" stroke-width="1.2"/>
<ellipse cx="521" cy="831" rx="23" ry="27" transform="rotate(-12 521 831)" fill="url(#gH)" stroke="#000" stroke-width="1.6"/>
<path d="M1009.0,322.6 L1009.0,321.4 L1027.0,138.9 L1027.2,137.8 L1027.5,136.7 L1027.9,135.6 L1028.5,134.5 L1029.3,133.4 L1030.2,132.4 L1031.2,131.4 L1032.4,130.4 L1033.7,129.4 L1035.2,128.5 L1036.8,127.5 L1038.5,126.6 L1040.3,125.8 L1042.3,125.0 L1044.4,124.2 L1046.7,123.4 L1049.0,122.7 L1051.5,122.0 L1054.0,121.3 L1056.7,120.7 L1059.5,120.1 L1062.4,119.6 L1065.3,119.1 L1068.4,118.7 L1071.6,118.3 L1074.8,117.9 L1078.1,117.6 L1081.4,117.3 L1084.9,117.1 L1088.4,116.9 L1091.9,116.8 L1095.5,116.7 L1099.1,116.6 L1102.8,116.6 L1106.5,116.7 L1110.2,116.8 L1114.0,116.9 L1117.7,117.1 L1121.5,117.3 L1125.3,117.6 L1129.0,117.9 L1132.8,118.3 L1136.5,118.7 L1140.3,119.1 L1144.0,119.6 L1147.6,120.2 L1151.2,120.7 L1154.8,121.3 L1158.4,122.0 L1161.8,122.7 L1165.3,123.4 L1168.6,124.2 L1171.9,125.0 L1175.1,125.8 L1178.2,126.7 L1181.3,127.5 L1184.2,128.5 L1187.1,129.4 L1189.8,130.4 L1192.5,131.4 L1195.0,132.4 L1197.5,133.5 L1199.8,134.5 L1202.0,135.6 L1204.1,136.7 L1206.0,137.8 L1207.9,139.0 L1209.6,140.1 L1211.1,141.3 L1212.6,142.4 L1213.9,143.6 L1215.0,144.8 L1216.0,145.9 L1216.9,147.1 L1217.6,148.3 L1218.2,149.4 L1218.6,150.6 L1218.9,151.8 L1219.0,152.9 L1219.0,154.1 L1201.0,336.6 L1200.8,337.7 L1200.5,338.8 L1200.1,339.9 L1199.5,341.0 L1198.7,342.1 L1197.8,343.1 L1196.8,344.1 L1195.6,345.1 L1194.3,346.1 L1192.8,347.0 L1191.2,348.0 L1189.5,348.9 L1187.7,349.7 L1185.7,350.6 L1183.6,351.3 L1181.3,352.1 L1179.0,352.8 L1176.5,353.5 L1174.0,354.2 L1171.3,354.8 L1168.5,355.4 L1165.6,355.9 L1162.7,356.4 L1159.6,356.8 L1156.4,357.2 L1153.2,357.6 L1149.9,357.9 L1146.6,358.2 L1143.1,358.4 L1139.6,358.6 L1136.1,358.7 L1132.5,358.8 L1128.9,358.9 L1125.2,358.9 L1121.5,358.8 L1117.8,358.7 L1114.0,358.6 L1110.3,358.4 L1106.5,358.2 L1102.7,357.9 L1099.0,357.6 L1095.2,357.2 L1091.5,356.8 L1087.7,356.4 L1084.0,355.9 L1080.4,355.4 L1076.8,354.8 L1073.2,354.2 L1069.6,353.5 L1066.2,352.8 L1062.7,352.1 L1059.4,351.3 L1056.1,350.5 L1052.9,349.7 L1049.8,348.8 L1046.7,347.9 L1043.8,347.0 L1040.9,346.1 L1038.2,345.1 L1035.5,344.1 L1033.0,343.1 L1030.5,342.0 L1028.2,341.0 L1026.0,339.9 L1023.9,338.8 L1022.0,337.7 L1020.1,336.5 L1018.4,335.4 L1016.9,334.2 L1015.4,333.1 L1014.1,331.9 L1013.0,330.8 L1012.0,329.6 L1011.1,328.4 L1010.4,327.2 L1009.8,326.1 L1009.4,324.9 L1009.1,323.7Z" fill="url(#gPist)" stroke="#000" stroke-width="1.6"/>
<ellipse cx="1123" cy="146.5" rx="96.3" ry="29" transform="rotate(4.5 1123 146.5)" fill="#6b9fd9" stroke="#000" stroke-width="1.6"/>
<path d="M1218.7,156.6 L1218.5,157.7 L1218.2,158.8 L1217.8,159.9 L1217.2,161.0 L1216.4,162.1 L1215.5,163.1 L1214.5,164.1 L1213.3,165.1 L1212.0,166.1 L1210.5,167.0 L1208.9,168.0 L1207.2,168.9 L1205.4,169.7 L1203.4,170.5 L1201.3,171.3 L1199.0,172.1 L1196.7,172.8 L1194.2,173.5 L1191.7,174.2 L1189.0,174.8 L1186.2,175.4 L1183.3,175.9 L1180.3,176.4 L1177.3,176.8 L1174.1,177.2 L1170.9,177.6 L1167.6,177.9 L1164.3,178.2 L1160.8,178.4 L1157.3,178.6 L1153.8,178.7 L1150.2,178.8 L1146.6,178.9 L1142.9,178.9 L1139.2,178.8 L1135.5,178.7 L1131.7,178.6 L1128.0,178.4 L1124.2,178.2 L1120.4,177.9 L1116.7,177.6 L1112.9,177.2 L1109.2,176.8 L1105.4,176.4 L1101.7,175.9 L1098.1,175.3 L1094.5,174.8 L1090.9,174.2 L1087.3,173.5 L1083.9,172.8 L1080.4,172.1 L1077.1,171.3 L1073.8,170.5 L1070.6,169.7 L1067.5,168.8 L1064.4,167.9 L1061.5,167.0 L1058.6,166.1 L1055.9,165.1 L1053.2,164.1 L1050.7,163.1 L1048.2,162.0 L1045.9,161.0 L1043.7,159.9 L1041.6,158.8 L1039.7,157.7 L1037.8,156.5 L1036.1,155.4 L1034.6,154.2 L1033.1,153.1 L1031.8,151.9 L1030.7,150.7 L1029.7,149.6 L1028.8,148.4 L1028.1,147.2 L1027.5,146.1 L1027.1,144.9 L1026.8,143.7 L1026.7,142.6 L1026.7,141.4" fill="none" stroke="#000" stroke-width="1.0" stroke-linejoin="round" stroke-linecap="round" />
<path d="M1217.2,171.1 L1217.0,172.2 L1216.7,173.3 L1216.3,174.4 L1215.7,175.5 L1214.9,176.6 L1214.0,177.6 L1213.0,178.6 L1211.8,179.6 L1210.5,180.6 L1209.0,181.5 L1207.4,182.5 L1205.7,183.4 L1203.9,184.2 L1201.9,185.0 L1199.8,185.8 L1197.5,186.6 L1195.2,187.3 L1192.7,188.0 L1190.2,188.7 L1187.5,189.3 L1184.7,189.9 L1181.8,190.4 L1178.8,190.9 L1175.8,191.3 L1172.6,191.7 L1169.4,192.1 L1166.1,192.4 L1162.8,192.7 L1159.3,192.9 L1155.8,193.1 L1152.3,193.2 L1148.7,193.3 L1145.1,193.4 L1141.4,193.4 L1137.7,193.3 L1134.0,193.2 L1130.2,193.1 L1126.5,192.9 L1122.7,192.7 L1118.9,192.4 L1115.2,192.1 L1111.4,191.7 L1107.7,191.3 L1103.9,190.9 L1100.2,190.4 L1096.6,189.8 L1093.0,189.3 L1089.4,188.7 L1085.8,188.0 L1082.4,187.3 L1078.9,186.6 L1075.6,185.8 L1072.3,185.0 L1069.1,184.2 L1066.0,183.3 L1062.9,182.4 L1060.0,181.5 L1057.1,180.6 L1054.4,179.6 L1051.7,178.6 L1049.2,177.6 L1046.7,176.5 L1044.4,175.5 L1042.2,174.4 L1040.1,173.3 L1038.2,172.2 L1036.3,171.0 L1034.6,169.9 L1033.1,168.7 L1031.6,167.6 L1030.3,166.4 L1029.2,165.2 L1028.2,164.1 L1027.3,162.9 L1026.6,161.7 L1026.0,160.6 L1025.6,159.4 L1025.3,158.2 L1025.2,157.1 L1025.2,155.9" fill="none" stroke="#000" stroke-width="1.6" stroke-linejoin="round" stroke-linecap="round" />
<path d="M1217.0,173.6 L1216.8,174.7 L1216.5,175.8 L1216.1,176.9 L1215.5,178.0 L1214.7,179.1 L1213.8,180.1 L1212.8,181.1 L1211.6,182.1 L1210.3,183.1 L1208.8,184.0 L1207.2,185.0 L1205.5,185.9 L1203.7,186.7 L1201.7,187.5 L1199.6,188.3 L1197.3,189.1 L1195.0,189.8 L1192.5,190.5 L1190.0,191.2 L1187.3,191.8 L1184.5,192.4 L1181.6,192.9 L1178.6,193.4 L1175.6,193.8 L1172.4,194.2 L1169.2,194.6 L1165.9,194.9 L1162.6,195.2 L1159.1,195.4 L1155.6,195.6 L1152.1,195.7 L1148.5,195.8 L1144.9,195.9 L1141.2,195.9 L1137.5,195.8 L1133.8,195.7 L1130.0,195.6 L1126.3,195.4 L1122.5,195.2 L1118.7,194.9 L1115.0,194.6 L1111.2,194.2 L1107.5,193.8 L1103.7,193.4 L1100.0,192.9 L1096.4,192.3 L1092.8,191.8 L1089.2,191.2 L1085.6,190.5 L1082.2,189.8 L1078.7,189.1 L1075.4,188.3 L1072.1,187.5 L1068.9,186.7 L1065.8,185.8 L1062.7,184.9 L1059.8,184.0 L1056.9,183.1 L1054.2,182.1 L1051.5,181.1 L1049.0,180.1 L1046.5,179.0 L1044.2,178.0 L1042.0,176.9 L1039.9,175.8 L1038.0,174.7 L1036.1,173.5 L1034.4,172.4 L1032.9,171.2 L1031.4,170.1 L1030.1,168.9 L1029.0,167.7 L1028.0,166.6 L1027.1,165.4 L1026.4,164.2 L1025.8,163.1 L1025.4,161.9 L1025.1,160.7 L1025.0,159.6 L1025.0,158.4" fill="none" stroke="#000" stroke-width="1.0" stroke-linejoin="round" stroke-linecap="round" />
<path d="M1215.8,185.6 L1215.6,186.7 L1215.3,187.8 L1214.9,188.9 L1214.3,190.0 L1213.5,191.1 L1212.6,192.1 L1211.6,193.1 L1210.4,194.1 L1209.1,195.1 L1207.6,196.0 L1206.0,197.0 L1204.3,197.9 L1202.5,198.7 L1200.5,199.5 L1198.4,200.3 L1196.1,201.1 L1193.8,201.8 L1191.3,202.5 L1188.8,203.2 L1186.1,203.8 L1183.3,204.4 L1180.4,204.9 L1177.4,205.4 L1174.4,205.8 L1171.2,206.2 L1168.0,206.6 L1164.7,206.9 L1161.4,207.2 L1157.9,207.4 L1154.4,207.6 L1150.9,207.7 L1147.3,207.8 L1143.7,207.9 L1140.0,207.9 L1136.3,207.8 L1132.6,207.7 L1128.8,207.6 L1125.1,207.4 L1121.3,207.2 L1117.5,206.9 L1113.8,206.6 L1110.0,206.2 L1106.3,205.8 L1102.5,205.4 L1098.8,204.9 L1095.2,204.3 L1091.6,203.8 L1088.0,203.2 L1084.4,202.5 L1081.0,201.8 L1077.5,201.1 L1074.2,200.3 L1070.9,199.5 L1067.7,198.7 L1064.6,197.8 L1061.5,196.9 L1058.6,196.0 L1055.7,195.1 L1053.0,194.1 L1050.3,193.1 L1047.8,192.1 L1045.3,191.0 L1043.0,190.0 L1040.8,188.9 L1038.7,187.8 L1036.8,186.7 L1034.9,185.5 L1033.2,184.4 L1031.7,183.2 L1030.2,182.1 L1028.9,180.9 L1027.8,179.7 L1026.8,178.6 L1025.9,177.4 L1025.2,176.2 L1024.6,175.1 L1024.2,173.9 L1023.9,172.7 L1023.8,171.6 L1023.8,170.4" fill="none" stroke="#000" stroke-width="1.6" stroke-linejoin="round" stroke-linecap="round" />
<path d="M1215.6,188.1 L1215.4,189.2 L1215.1,190.3 L1214.7,191.4 L1214.1,192.5 L1213.3,193.6 L1212.4,194.6 L1211.4,195.6 L1210.2,196.6 L1208.9,197.6 L1207.4,198.5 L1205.8,199.5 L1204.1,200.4 L1202.3,201.2 L1200.3,202.0 L1198.2,202.8 L1195.9,203.6 L1193.6,204.3 L1191.1,205.0 L1188.6,205.7 L1185.9,206.3 L1183.1,206.9 L1180.2,207.4 L1177.2,207.9 L1174.2,208.3 L1171.0,208.7 L1167.8,209.1 L1164.5,209.4 L1161.2,209.7 L1157.7,209.9 L1154.2,210.1 L1150.7,210.2 L1147.1,210.3 L1143.5,210.4 L1139.8,210.4 L1136.1,210.3 L1132.4,210.2 L1128.6,210.1 L1124.9,209.9 L1121.1,209.7 L1117.3,209.4 L1113.6,209.1 L1109.8,208.7 L1106.1,208.3 L1102.3,207.9 L1098.6,207.4 L1095.0,206.8 L1091.4,206.3 L1087.8,205.7 L1084.2,205.0 L1080.8,204.3 L1077.3,203.6 L1074.0,202.8 L1070.7,202.0 L1067.5,201.2 L1064.4,200.3 L1061.3,199.4 L1058.4,198.5 L1055.5,197.6 L1052.8,196.6 L1050.1,195.6 L1047.6,194.6 L1045.1,193.5 L1042.8,192.5 L1040.6,191.4 L1038.5,190.3 L1036.6,189.2 L1034.7,188.0 L1033.0,186.9 L1031.5,185.7 L1030.0,184.6 L1028.7,183.4 L1027.6,182.2 L1026.6,181.1 L1025.7,179.9 L1025.0,178.7 L1024.4,177.6 L1024.0,176.4 L1023.7,175.2 L1023.6,174.1 L1023.6,172.9" fill="none" stroke="#000" stroke-width="1.0" stroke-linejoin="round" stroke-linecap="round" />
<path d="M1214.4,200.1 L1214.2,201.2 L1213.9,202.3 L1213.5,203.4 L1212.9,204.5 L1212.1,205.6 L1211.2,206.6 L1210.2,207.6 L1209.0,208.6 L1207.7,209.6 L1206.2,210.5 L1204.6,211.5 L1202.9,212.4 L1201.1,213.2 L1199.1,214.0 L1197.0,214.8 L1194.7,215.6 L1192.4,216.3 L1189.9,217.0 L1187.4,217.7 L1184.7,218.3 L1181.9,218.9 L1179.0,219.4 L1176.0,219.9 L1173.0,220.3 L1169.8,220.7 L1166.6,221.1 L1163.3,221.4 L1160.0,221.7 L1156.5,221.9 L1153.0,222.1 L1149.5,222.2 L1145.9,222.3 L1142.3,222.4 L1138.6,222.4 L1134.9,222.3 L1131.2,222.2 L1127.4,222.1 L1123.7,221.9 L1119.9,221.7 L1116.1,221.4 L1112.4,221.1 L1108.6,220.7 L1104.9,220.3 L1101.1,219.9 L1097.4,219.4 L1093.8,218.8 L1090.2,218.3 L1086.6,217.7 L1083.0,217.0 L1079.6,216.3 L1076.1,215.6 L1072.8,214.8 L1069.5,214.0 L1066.3,213.2 L1063.2,212.3 L1060.1,211.4 L1057.2,210.5 L1054.3,209.6 L1051.6,208.6 L1048.9,207.6 L1046.4,206.6 L1043.9,205.5 L1041.6,204.5 L1039.4,203.4 L1037.3,202.3 L1035.4,201.2 L1033.5,200.0 L1031.8,198.9 L1030.3,197.7 L1028.8,196.6 L1027.5,195.4 L1026.4,194.2 L1025.4,193.1 L1024.5,191.9 L1023.8,190.7 L1023.2,189.6 L1022.8,188.4 L1022.5,187.2 L1022.4,186.1 L1022.4,184.9" fill="none" stroke="#000" stroke-width="1.6" stroke-linejoin="round" stroke-linecap="round" />
<path d="M1208.7,185.5 L1207.1,186.5 L1205.4,187.4 L1203.6,188.2 L1201.6,189.0 L1199.5,189.8 L1197.2,190.6 L1194.9,191.3 L1192.4,192.0 L1189.9,192.7 L1187.2,193.3 L1184.4,193.9 L1181.5,194.4 L1178.5,194.9 L1175.5,195.3 L1172.3,195.7 L1169.1,196.1 L1165.8,196.4 L1162.5,196.7 L1159.0,196.9 L1155.5,197.1 L1152.0,197.2 L1148.4,197.3 L1144.8,197.4 L1141.1,197.4 L1137.4,197.3 L1133.7,197.2 L1129.9,197.1 L1126.2,196.9 L1122.4,196.7 L1118.6,196.4 L1114.9,196.1 L1111.1,195.7 L1107.4,195.3 L1103.6,194.9 L1099.9,194.4 L1096.3,193.8 L1092.7,193.3 L1089.1,192.7 L1085.5,192.0 L1082.1,191.3 L1078.6,190.6 L1075.3,189.8 L1072.0,189.0 L1068.8,188.2 L1065.7,187.3 L1062.6,186.4 L1059.7,185.5 L1056.8,184.6 L1054.1,183.6 L1051.4,182.6 L1048.9,181.6 L1046.4,180.5 L1044.1,179.5 L1041.9,178.4 L1039.8,177.3 L1037.9,176.2 L1036.0,175.0 L1034.3,173.9 L1032.8,172.7 L1031.3,171.6 L1030.0,170.4 L1028.9,169.2 L1027.9,168.1 L1027.0,166.9" fill="none" stroke="#a8c8ec" stroke-width="1.0" stroke-linejoin="round" stroke-linecap="round" opacity="0.7"/>
<path d="M1207.2,200.5 L1205.6,201.5 L1203.9,202.4 L1202.1,203.2 L1200.1,204.0 L1198.0,204.8 L1195.7,205.6 L1193.4,206.3 L1190.9,207.0 L1188.4,207.7 L1185.7,208.3 L1182.9,208.9 L1180.0,209.4 L1177.0,209.9 L1174.0,210.3 L1170.8,210.7 L1167.6,211.1 L1164.3,211.4 L1161.0,211.7 L1157.5,211.9 L1154.0,212.1 L1150.5,212.2 L1146.9,212.3 L1143.3,212.4 L1139.6,212.4 L1135.9,212.3 L1132.2,212.2 L1128.4,212.1 L1124.7,211.9 L1120.9,211.7 L1117.1,211.4 L1113.4,211.1 L1109.6,210.7 L1105.9,210.3 L1102.1,209.9 L1098.4,209.4 L1094.8,208.8 L1091.2,208.3 L1087.6,207.7 L1084.0,207.0 L1080.6,206.3 L1077.1,205.6 L1073.8,204.8 L1070.5,204.0 L1067.3,203.2 L1064.2,202.3 L1061.1,201.4 L1058.2,200.5 L1055.3,199.6 L1052.6,198.6 L1049.9,197.6 L1047.4,196.6 L1044.9,195.5 L1042.6,194.5 L1040.4,193.4 L1038.3,192.3 L1036.4,191.2 L1034.5,190.0 L1032.8,188.9 L1031.3,187.7 L1029.8,186.6 L1028.5,185.4 L1027.4,184.2 L1026.4,183.1 L1025.5,181.9" fill="none" stroke="#a8c8ec" stroke-width="1.0" stroke-linejoin="round" stroke-linecap="round" opacity="0.7"/>
<path d="M1206.0,212.5 L1204.4,213.5 L1202.7,214.4 L1200.9,215.2 L1198.9,216.0 L1196.8,216.8 L1194.5,217.6 L1192.2,218.3 L1189.7,219.0 L1187.2,219.7 L1184.5,220.3 L1181.7,220.9 L1178.8,221.4 L1175.8,221.9 L1172.8,222.3 L1169.6,222.7 L1166.4,223.1 L1163.1,223.4 L1159.8,223.7 L1156.3,223.9 L1152.8,224.1 L1149.3,224.2 L1145.7,224.3 L1142.1,224.4 L1138.4,224.4 L1134.7,224.3 L1131.0,224.2 L1127.2,224.1 L1123.5,223.9 L1119.7,223.7 L1115.9,223.4 L1112.2,223.1 L1108.4,222.7 L1104.7,222.3 L1100.9,221.9 L1097.2,221.4 L1093.6,220.8 L1090.0,220.3 L1086.4,219.7 L1082.8,219.0 L1079.4,218.3 L1075.9,217.6 L1072.6,216.8 L1069.3,216.0 L1066.1,215.2 L1063.0,214.3 L1059.9,213.4 L1057.0,212.5 L1054.1,211.6 L1051.4,210.6 L1048.7,209.6 L1046.2,208.6 L1043.7,207.5 L1041.4,206.5 L1039.2,205.4 L1037.1,204.3 L1035.2,203.2 L1033.3,202.0 L1031.6,200.9 L1030.1,199.7 L1028.6,198.6 L1027.3,197.4 L1026.2,196.2 L1025.2,195.1 L1024.3,193.9" fill="none" stroke="#a8c8ec" stroke-width="1.0" stroke-linejoin="round" stroke-linecap="round" opacity="0.7"/>
<path d="M1021,239 L1030,240 Q1036,238 1039,228 Q1041,224 1046,225 L1077,234 Q1082,237 1083,246 Q1084,256 1092,261 L1111,268 L1106,336 L1013,307 Z" fill="#6ca6e4" stroke="#000" stroke-width="1.2"/>
<path d="M1015.0,306.0 L1060.0,321.0 L1104.0,335.0" fill="none" stroke="#b8dcff" stroke-width="1.5" stroke-linejoin="round" stroke-linecap="round" opacity="0.8"/>
<path d="M1034.0,240.0 C1034.0,237.8 1037.8,231.2 1040.0,229.0 C1042.2,226.8 1046.0,226.0 1047.0,227.0 C1048.0,228.0 1047.2,232.5 1046.0,235.0 C1044.8,237.5 1042.0,241.2 1040.0,242.0 C1038.0,242.8 1034.0,242.2 1034.0,240.0Z" fill="#3e6aa0" />
<ellipse cx="1063" cy="274" rx="20" ry="25" transform="rotate(-8 1063 274)" fill="#5a8cc8" stroke="#000" stroke-width="1.3"/>
<ellipse cx="1063" cy="274" rx="16" ry="21" transform="rotate(-8 1063 274)" fill="#d4cce6" stroke="#000" stroke-width="1"/>
<ellipse cx="1065" cy="274" rx="10" ry="14" transform="rotate(-8 1065 274)" fill="url(#gPin)" stroke="#000" stroke-width="1"/>
<path d="M1022.0,191.0 C1023.0,185.7 1028.3,189.5 1029.0,190.0 C1029.7,190.5 1026.5,188.7 1026.0,194.0 C1025.5,199.3 1026.5,217.3 1026.0,222.0 C1025.5,226.7 1023.7,227.2 1023.0,222.0 C1022.3,216.8 1021.0,196.3 1022.0,191.0Z" fill="#3c6898" stroke="#000" stroke-width="0.8"/>
<path d="M1108.0,221.0 C1110.0,216.7 1116.7,215.8 1117.0,220.0 C1117.3,224.2 1112.0,241.7 1110.0,246.0 C1108.0,250.3 1105.3,250.2 1105.0,246.0 C1104.7,241.8 1106.0,225.3 1108.0,221.0Z" fill="#3c6898" stroke="#000" stroke-width="0.8"/>
<g stroke="#000" stroke-width="1" fill="none"><path d="M1798,10.5H1808"/><rect x="1843.5" y="7.5" width="7.5" height="7.5"/><path d="M1845.5,7.5V5.5H1853.5V13.5H1851.5"/><path d="M1889,5L1899,15M1899,5L1889,15"/></g>
<g><rect x="2" y="5" width="15" height="14" fill="#0a0a14"/><path d="M3,17 Q8,10 14,6 L16,8 Q10,13 6,19Z" fill="#2f7fd0"/><circle cx="12" cy="10" r="4" fill="#f0b060" opacity="0.9"/><circle cx="11" cy="11" r="2" fill="#fff0c0"/></g>
<g><rect x="4" y="26" width="15" height="14" fill="#0a0a14"/><path d="M5,38 Q10,31 16,27 L18,29 Q12,34 8,40Z" fill="#2f7fd0"/><circle cx="14" cy="31" r="4" fill="#f0b060" opacity="0.9"/><circle cx="13" cy="32" r="2" fill="#fff0c0"/></g>
<g fill="#6e7480" stroke="#6e7480"><rect x="1867" y="34.5" width="6" height="1.6" stroke="none"/><path d="M1888.5,31.5h5v4h-5z M1890.5,31.5v-2h5v4h-2" fill="none" stroke-width="1.2"/><path d="M1905.5,30.5l5,5m0,-5l-5,5" stroke-width="1.8"/></g>
<path d="M274,60l4,4l4,-4" fill="none" stroke="#333" stroke-width="1.1"/>
<path d="M346,60l4,4l4,-4" fill="none" stroke="#333" stroke-width="1.1"/>
<path d="M418,60l4,4l4,-4" fill="none" stroke="#333" stroke-width="1.1"/>
<path d="M490,60l4,4l4,-4" fill="none" stroke="#333" stroke-width="1.1"/>
<path d="M540,60l4,4l4,-4" fill="none" stroke="#333" stroke-width="1.1"/>
<rect x="519" y="60" width="3" height="3" fill="#000"/>
<path d="M590,60l4,4l4,-4" fill="none" stroke="#b0b0b8" stroke-width="1.1"/>
<path d="M661,60l4,4l4,-4" fill="none" stroke="#333" stroke-width="1.1"/>
<g fill="none" stroke="#808090"><rect x="1863.5" y="1134.5" width="7" height="7"/><rect x="1871" y="1140" width="2" height="2" fill="#808090"/><circle cx="1902" cy="1139" r="6"/><path d="M1902,1136v1M1902,1138.5v3.5"/></g>
<g stroke="#fff" stroke-width="1" fill="none"><path d="M1848.5,1045V1062H1857M1848.5,1062L1841,1065"/></g>
<rect x="7" y="48" width="3" height="14" fill="#fafaff" stroke="#a8a8b8" stroke-width=".8"/>
<rect x="210" y="48" width="3" height="14" fill="#fafaff" stroke="#a8a8b8" stroke-width=".8"/>
<rect x="743" y="48" width="3" height="14" fill="#fafaff" stroke="#a8a8b8" stroke-width=".8"/>
<rect x="902" y="48" width="3" height="14" fill="#fafaff" stroke="#a8a8b8" stroke-width=".8"/>
<rect x="1262" y="48" width="3" height="14" fill="#fafaff" stroke="#a8a8b8" stroke-width=".8"/>
<path d="M131.5,47V77" stroke="#8c8c9c" stroke-width="1"/><path d="M132.5,47V77" stroke="#fff" stroke-width="1"/>
<g transform="translate(20,52)"><rect x="8" y="8" width="4" height="4" fill="#101050"/></g>
<g transform="translate(48,52)"><path d="M2,18C2,10 8,12 10,14 C13,17 17,12 16,7 C15,3 11,2 9,4" fill="none" stroke="#104080" stroke-width="1.3"/><path d="M3,17C3,11 8,13 10,15" fill="none" stroke="#60d0f0" stroke-width=".8"/></g>
<g transform="translate(75,52)"><path d="M1,14C3,5 10,2 15,3 C19,4 21,9 19,16 C16,12 12,11 8,11 C5,11 2,13 1,14Z" fill="#50d8f0" stroke="#000" stroke-width="1.2"/></g>
<g transform="translate(104,52)"><path d="M1,11L9,4L19,8L11,15Z" fill="#f8e080" stroke="#000"/><path d="M11,15L19,8V11L11,18Z" fill="#30a0b0" stroke="#000"/><path d="M1,11V13L11,18V15Z" fill="#80c8d0" stroke="#000"/><path d="M13,5L19,8L15,10Z" fill="#fff" stroke="#000" stroke-width=".6"/></g>
<g transform="translate(140,52)"><path d="M2,7.95H13V18.95H2Z" fill="#60d8f0" stroke="#000" stroke-width="1"/><path d="M2,7.95L6.95,3H17.95L13,7.95Z" fill="#a0f0ff" stroke="#000" stroke-width="1"/><path d="M13,7.95L17.95,3V14L13,18.95Z" fill="#20a0c0" stroke="#000" stroke-width="1"/><path d="M10,8V18L12.5,15.5L15,20L17,19L14.5,14.5H18Z" fill="#f8f080" stroke="#000" stroke-width="1"/></g>
<g transform="translate(168,52)"><path d="M2,7.95H13V18.95H2Z" fill="#fff" stroke="#000" stroke-width="1"/><path d="M2,7.95L6.95,3H17.95L13,7.95Z" fill="#fff" stroke="#000" stroke-width="1"/><path d="M13,7.95L17.95,3V14L13,18.95Z" fill="#fff" stroke="#000" stroke-width="1"/><rect x="9" y="9" width="4" height="9" fill="#60d8f0"/><path d="M10,8V18L12.5,15.5L15,20L17,19L14.5,14.5H18Z" fill="#f8f080" stroke="#000" stroke-width="1"/></g>
<g transform="translate(679,52)"><path d="M1,12H12M1,14H13M1,16H14M1,18H14" stroke="#20a0f0" stroke-width="1.3"/><path d="M8,10L14,4L20,10L14,16Z" fill="#f0e860" stroke="#000"/><path d="M17,6L22,1" stroke="#102080" stroke-width="3"/></g>
<g transform="translate(709,52)"><defs><radialGradient id="sph"><stop offset="0" stop-color="#f8f040"/><stop offset="0.7" stop-color="#f0c030"/><stop offset="1" stop-color="#c040c0"/></radialGradient></defs><circle cx="8" cy="13" r="6.5" fill="url(#sph)"/><path d="M12,8L19,14" stroke="#2040a0" stroke-width="3"/><path d="M12.5,8L18.5,13.5" stroke="#a0d0f0" stroke-width="1"/><path d="M14,3L17,1M16,4L19,3" stroke="#f0a080" stroke-width="1.2"/></g>
<g transform="translate(755,52)"><path d="M7,3L10,9L13,3" fill="none" stroke="#102060" stroke-width="1.4"/><path d="M2,17C5,13 10,12 19,12M9,14H15M15,11L19,15" fill="none" stroke="#102060" stroke-width="1.2"/><path d="M1,18l3,-1l-1.5,-2z" fill="#102060"/></g>
<g transform="translate(784,52)"><text x="8" y="9" font-size="8" font-family="Liberation Sans" font-weight="bold" fill="#102060">ABC</text><path d="M2,18L7,12H20" fill="none" stroke="#102060" stroke-width="1.2"/><path d="M1,19l4,-1l-2,-2z" fill="#102060"/></g>
<g transform="translate(811,52)"><path d="M10,5H18L21,8.5L18,12H10Z" fill="#fff" stroke="#102060" stroke-width="1.3"/><path d="M2,18L6,13H10" fill="none" stroke="#102060" stroke-width="1.2"/><path d="M1,19l4,-1l-2,-2z" fill="#102060"/></g>
<g transform="translate(841,52)"><path d="M6,6L15,1V13L6,18Z" fill="#b0b0b0" stroke="#909090"/><path d="M4,8V18H9M7,15l2,3" fill="none" stroke="#fff" stroke-width="1.5"/><path d="M4,8V18H9" fill="none" stroke="#606060" stroke-width=".6"/></g>
<g transform="translate(868,52)"><rect x="8" y="1" width="6" height="6" fill="#fff" stroke="#c00000"/><path d="M11,7V12" stroke="#c00000" stroke-width="1.5"/><path d="M1,13L8,9H20L14,13Z" fill="#f8e080" stroke="#000"/><path d="M9,11L11,7L13,11Z" fill="#c00000"/><path d="M1,13H14V18H1Z" fill="#40c8d8" stroke="#000"/><path d="M14,13L20,9V14L14,18Z" fill="#30a0b0" stroke="#000"/></g>
<g transform="translate(913,52)"><path d="M2,4H8M5,1V7M3,2L7,6M7,2L3,6" stroke="#f0e020" stroke-width="1.5"/><circle cx="5" cy="4" r="1" fill="#000"/><path d="M2,8Q1,13 5,14" stroke="#2060c0" stroke-width="2" fill="none"/><polygon points="19.0,13.0 16.7,14.9 16.9,17.9 13.9,17.7 12.0,20.0 10.1,17.7 7.1,17.9 7.3,14.9 5.0,13.0 7.3,11.1 7.1,8.1 10.1,8.3 12.0,6.0 13.9,8.3 16.9,8.1 16.7,11.1" fill="#f0d070" stroke="#802010" stroke-width="1.2"/><circle cx="12" cy="13" r="2.1" fill="#802010"/></g>
<g transform="translate(943,52)"><path d="M2,1H14L18,5V19H2Z" fill="#fff" stroke="#20b0c0" stroke-width="1.5"/><path d="M14,1V5H18" fill="#c0f0f8" stroke="#20b0c0" stroke-width="1"/><path d="M1,4H7M4,1V7M2,2L6,6M6,2L2,6" stroke="#f0e020" stroke-width="1.5"/><circle cx="4" cy="4" r="1" fill="#000"/><path d="M6,7L10,10L6,12Z" fill="#2040c0"/><polygon points="17.5,13.0 15.7,14.5 15.9,16.9 13.5,16.7 12.0,18.5 10.5,16.7 8.1,16.9 8.3,14.5 6.5,13.0 8.3,11.5 8.1,9.1 10.5,9.3 12.0,7.5 13.5,9.3 15.9,9.1 15.7,11.5" fill="#f0d070" stroke="#802010" stroke-width="1.2"/><circle cx="12" cy="13" r="1.6" fill="#802010"/></g>
<g transform="translate(970,52)"><path d="M5,1H15L19,5V18H5Z" fill="#fff" stroke="#20b0c0" stroke-width="1.5"/><path d="M15,1V5H19" fill="#c0f0f8" stroke="#20b0c0" stroke-width="1"/><path d="M1,4H7M4,1V7M2,2L6,6M6,2L2,6" stroke="#f0e020" stroke-width="1.5"/><circle cx="4" cy="4" r="1" fill="#000"/><polygon points="15.5,12.0 13.3,13.8 13.6,16.6 10.8,16.3 9.0,18.5 7.2,16.3 4.4,16.6 4.7,13.8 2.5,12.0 4.7,10.2 4.4,7.4 7.2,7.7 9.0,5.5 10.8,7.7 13.6,7.4 13.3,10.2" fill="#f0e0a0" stroke="#505050" stroke-width="1.2"/><circle cx="9" cy="12" r="1.9" fill="#505050"/></g>
<g transform="translate(999,52)"><path d="M2,1H13L17,5V19H2Z" fill="#fff" stroke="#20b0c0" stroke-width="1.5"/><path d="M13,1V5H17" fill="#c0f0f8" stroke="#20b0c0" stroke-width="1"/><path d="M3,12H10V9L15,13L10,17V14H3Z" fill="#f0f020" stroke="#203080" stroke-width="1"/></g>
<g transform="translate(1027,52)"><path d="M2,1H13L17,5V19H2Z" fill="#fff" stroke="#20b0c0" stroke-width="1.5"/><path d="M13,1V5H17" fill="#c0f0f8" stroke="#20b0c0" stroke-width="1"/><path d="M4,18L9,12L8,8H12L14,13" stroke="#c030c0" fill="none" stroke-width="1.6"/><path d="M8,6H15V3L20,7L15,11V8H8Z" fill="#f0f020" stroke="#203080" stroke-width="1"/></g>
<g transform="translate(1055,52)"><rect x="2" y="1" width="5" height="5" fill="#e0e060" stroke="#402080" stroke-width="1.5"/><path d="M9,5L14,10" stroke="#f0a000" stroke-width="2"/><path d="M1,16H6M9,13L18,18M9,18L18,13" stroke="#2040d0" stroke-width="1.6"/></g>
<g transform="translate(1083,52)"><rect x="1" y="1" width="10" height="3" fill="#fff" stroke="#000"/><path d="M2,4V18M2,8H8M2,12H8M2,16H8" stroke="#000"/><rect x="4" y="7" width="6" height="2.5" fill="#40b0b0" stroke="#000" stroke-width=".6"/><rect x="4" y="11" width="6" height="2.5" fill="#40b0b0" stroke="#000" stroke-width=".6"/><rect x="4" y="15" width="6" height="2.5" fill="#40b0b0" stroke="#000" stroke-width=".6"/><path d="M13,8Q20,10 16,17" stroke="#e02020" fill="none" stroke-width="2.2"/></g>
<g transform="translate(1111,52)"><rect x="1" y="6" width="12" height="13" fill="#fff" stroke="#000"/><rect x="9" y="1" width="10" height="11" fill="#fff" stroke="#000"/><text x="10" y="10" font-size="9" font-family="Liberation Serif" fill="#000">15</text><text x="2.5" y="18" font-size="11" font-family="Liberation Serif" font-weight="bold" fill="#000">A</text></g>
<g transform="translate(1138,52)"><rect x="2" y="1" width="9" height="3" fill="#fff" stroke="#000" stroke-width="1"/><path d="M4,4V12H8" stroke="#000" fill="none"/><rect x="8" y="7" width="11" height="12" fill="#f0f040" stroke="#e04010" stroke-width="1.5"/><path d="M11,9V17M11,11H14M11,14H14M11,17H14" stroke="#000" fill="none"/><rect x="12" y="9.5" width="5" height="2.5" fill="#40a0a0" stroke="#000" stroke-width=".6"/><rect x="13" y="13" width="5" height="2.5" fill="#40a0a0" stroke="#000" stroke-width=".6"/></g>
<g transform="translate(1166,52)"><rect x="1" y="1" width="10" height="3" fill="#fff" stroke="#000"/><path d="M2,4V15H6" stroke="#000" fill="none"/><path d="M12,6L19,3V19L12,16Z" fill="#e0e8ff" stroke="#2030c0"/><path d="M5,14L9,9M7,11L12,11" stroke="#f0e040" stroke-width="2"/></g>
<g transform="translate(1193,52)"><path d="M6,1L11,6M11,1L6,6" stroke="#000" stroke-width="1.5"/><text x="13" y="7" font-size="7" fill="#000" font-family="Liberation Sans">n</text><polygon points="11.0,12.0 9.3,13.4 9.5,15.5 7.4,15.3 6.0,17.0 4.6,15.3 2.5,15.5 2.7,13.4 1.0,12.0 2.7,10.6 2.5,8.5 4.6,8.7 6.0,7.0 7.4,8.7 9.5,8.5 9.3,10.6" fill="#2080e0" stroke="#103060" stroke-width="1.2"/><circle cx="6" cy="12" r="1.5" fill="#103060"/><polygon points="16.0,15.0 14.3,16.4 14.5,18.5 12.4,18.3 11.0,20.0 9.6,18.3 7.5,18.5 7.7,16.4 6.0,15.0 7.7,13.6 7.5,11.5 9.6,11.7 11.0,10.0 12.4,11.7 14.5,11.5 14.3,13.6" fill="#f0d070" stroke="#802010" stroke-width="1.2"/><circle cx="11" cy="15" r="1.5" fill="#802010"/></g>
<g transform="translate(1275,52)"><path d="M3,2V8H8" stroke="#000" fill="none"/><rect x="2" y="11" width="7" height="7" fill="#b01020" stroke="#000"/><path d="M8,5.15H15V12.15H8Z" fill="#20a0b0" stroke="#000" stroke-width="1"/><path d="M8,5.15L11.15,2H18.15L15,5.15Z" fill="#60d0e0" stroke="#000" stroke-width="1"/><path d="M15,5.15L18.15,2V9L15,12.15Z" fill="#f0e060" stroke="#000" stroke-width="1"/><path d="M9,17H18l-2,-2" stroke="#000" fill="none"/></g>
<g transform="translate(1302,52)"><path d="M3,2V8H8" stroke="#000" fill="none"/><rect x="2" y="11" width="7" height="7" fill="#b01020" stroke="#000"/><path d="M7,6.15H14V13.15H7Z" fill="#20a0b0" stroke="#000" stroke-width="1"/><path d="M7,6.15L10.15,3H17.15L14,6.15Z" fill="#60d0e0" stroke="#000" stroke-width="1"/><path d="M14,6.15L17.15,3V10L14,13.15Z" fill="#f0e060" stroke="#000" stroke-width="1"/><path d="M13,2H20L16,8L20,19H13L17,13Z" fill="#f0e080" stroke="#000" stroke-width=".8"/></g>
<g transform="translate(1329,52)"><rect x="1" y="1" width="10" height="3" fill="#fff" stroke="#000"/><path d="M2,4V18M2,8H8M2,12H8M2,16H8" stroke="#000"/><rect x="4" y="7" width="6" height="2.5" fill="#40b0b0" stroke="#000" stroke-width=".6"/><rect x="4" y="11" width="6" height="2.5" fill="#40b0b0" stroke="#000" stroke-width=".6"/><path d="M13,8Q19,11 14,17" stroke="#f0e060" fill="none" stroke-width="2.5"/><path d="M13,8Q19,11 14,17" stroke="#000" fill="none" stroke-width=".5"/></g>
<path d="M801,72h7l-3.5,3.5z" fill="#000"/>
<path d="M829,72h7l-3.5,3.5z" fill="#000"/>
<path d="M1211,72h7l-3.5,3.5z" fill="#000"/>
<rect x="3" y="86" width="16" height="3" fill="#fafaff" stroke="#a8a8b8" stroke-width=".8"/>
<rect x="3" y="270" width="16" height="3" fill="#fafaff" stroke="#a8a8b8" stroke-width=".8"/>
<g transform="translate(8,98)"><rect x="2" y="1" width="9" height="3" fill="#fff" stroke="#000" stroke-width="1"/><path d="M4,4V12H8" stroke="#000" fill="none"/><rect x="8" y="7" width="11" height="12" fill="#f0f040" stroke="#e04010" stroke-width="1.5"/><path d="M11,9V17M11,11H14M11,14H14M11,17H14" stroke="#000" fill="none"/><rect x="12" y="9.5" width="5" height="2.5" fill="#40a0a0" stroke="#000" stroke-width=".6"/><rect x="13" y="13" width="5" height="2.5" fill="#40a0a0" stroke="#000" stroke-width=".6"/></g>
<g transform="translate(8,127)"><circle cx="8" cy="10" r="7.5" fill="#102030"/><path d="M3,12C3,5 12,3 14,8" stroke="#f0f0c0" stroke-width="2.2" fill="none"/><path d="M5,12C6,8 10,7 11,10" stroke="#40c0e0" stroke-width="1.5" fill="none"/><path d="M11,7V17M11,9H14M11,13H14M11,17H14" stroke="#2020c0" fill="none"/><rect x="13" y="8" width="5" height="2.5" fill="#fff" stroke="#2020c0" stroke-width=".7"/><rect x="13" y="12" width="5" height="2.5" fill="#fff" stroke="#2020c0" stroke-width=".7"/><rect x="13" y="16" width="5" height="2.5" fill="#fff" stroke="#2020c0" stroke-width=".7"/></g>
<g transform="translate(8,155)"><rect x="8" y="1" width="5" height="3" fill="#fff" stroke="#000"/><path d="M10,4V8" stroke="#000"/><rect x="11" y="7" width="8" height="11" fill="#f0e040" stroke="#e02010" stroke-width="1.5"/><path d="M13,9H17M13,12H17M13,15H17" stroke="#208080" stroke-width="1.8"/><path d="M1,10Q4,8 9,10" stroke="#e02020" fill="none" stroke-width="1.3"/><path d="M2,12V19M2,14H6M2,18H6" stroke="#000" fill="none"/><rect x="4" y="13" width="4" height="2" fill="#40a0a0" stroke="#000" stroke-width=".5"/><rect x="4" y="17" width="4" height="2" fill="#40a0a0" stroke="#000" stroke-width=".5"/></g>
<g transform="translate(8,182)"><rect x="6" y="1" width="7" height="3" fill="#30b0b0" stroke="#000"/><path d="M8,4V8H12" stroke="#000" fill="none"/><rect x="11" y="7" width="8" height="3" fill="#30b0b0" stroke="#000"/><ellipse cx="4" cy="11" rx="3.5" ry="1.5" fill="#fff" stroke="#000"/><path d="M0.5,11V18Q4,20 7.5,18V11" fill="#f0f0f0" stroke="#000"/><path d="M8,18H13L15,15" stroke="#000" fill="none" stroke-width="1.2"/></g>
<g transform="translate(8,210)"><rect x="1" y="1" width="7" height="3" fill="#40c8e0" stroke="#000"/><path d="M3,4V9H6M6,10V15H10" stroke="#000" fill="none"/><rect x="5" y="8" width="8" height="3" fill="#40c8e0" stroke="#000"/><rect x="9" y="14" width="10" height="5" fill="#f0e080" stroke="#f0e020"/><rect x="10" y="15" width="8" height="3" fill="#f8f8c0" stroke="#000" stroke-width=".7"/><circle cx="16" cy="5" r="3" fill="#f0e020" stroke="#000"/><rect x="15" y="8" width="2" height="3" fill="#000"/></g>
<g transform="translate(8,239)"><path d="M4,3H8V6H11M10,3H14V6M11,6V11H7M11,11H15M7,11V16M15,11V16" stroke="#000" fill="none"/><rect x="2" y="2" width="4" height="2" fill="#40b0b0" stroke="#000" stroke-width=".6"/><rect x="10" y="2" width="4" height="2" fill="#40b0b0" stroke="#000" stroke-width=".6"/><rect x="5" y="15" width="4" height="2" fill="#40b0b0" stroke="#000" stroke-width=".6"/><rect x="13" y="15" width="4" height="2" fill="#40b0b0" stroke="#000" stroke-width=".6"/><path d="M7,9L10,6" stroke="#e02020" stroke-width="1.2"/></g>
<g transform="translate(8,284)"><path d="M3,3V18M3,6H7M3,11H8M3,17H7" stroke="#2040c0" fill="none" stroke-width="1.2"/><rect x="4" y="1" width="7" height="3" fill="#70d8f0" stroke="#2040c0" stroke-width=".8"/><rect x="6" y="9" width="7" height="3" fill="#70d8f0" stroke="#2040c0" stroke-width=".8"/><rect x="13" y="12" width="6" height="3" fill="#70d8f0" stroke="#2040c0" stroke-width=".8"/><rect x="5" y="16" width="7" height="3" fill="#70d8f0" stroke="#2040c0" stroke-width=".8"/><path d="M13,10H8l2,-2" stroke="#000" fill="none"/></g>
<g transform="translate(8,312)"><path d="M3,3V18M3,7H7M3,12H7M3,17H7" stroke="#000" fill="none"/><rect x="2" y="1" width="7" height="3" fill="#fff" stroke="#000" stroke-width=".8"/><rect x="5" y="6" width="6" height="3" fill="#f0e040" stroke="#000" stroke-width=".8"/><rect x="5" y="11" width="6" height="3" fill="#40a0a0" stroke="#000" stroke-width=".8"/><rect x="5" y="16" width="6" height="3" fill="#40a0a0" stroke="#000" stroke-width=".8"/><path d="M13,6H17V16H13" stroke="#e02020" fill="none" stroke-width="1.3"/></g>
<g transform="translate(8,339)"><text x="0" y="8" font-size="5" fill="#000">x</text><text x="0" y="13" font-size="5" fill="#000">y</text><rect x="7" y="4" width="12" height="10" fill="#f08070" opacity=".5" stroke="#e04030"/><rect x="9" y="2" width="5" height="2.5" fill="#fff" stroke="#000"/><path d="M3,12V19M3,15H7M3,18H7" stroke="#000" fill="none"/><path d="M17,14V18H10" stroke="#e02020" fill="none" stroke-width="1.3"/><rect x="10" y="7" width="6" height="2.5" fill="#40a0a0" stroke="#000" stroke-width=".6"/></g>
<g transform="translate(8,369)"><path d="M3,1H13L17,5V19H3Z" fill="#fff" stroke="#000" stroke-width="1.5"/><path d="M13,1V5H17" fill="#c0f0f8" stroke="#000" stroke-width="1"/><path d="M6,14C6,9 13,8 13,12C13,15 9,15 9,13" stroke="#808040" fill="none" stroke-width="1.3"/><path d="M6,6H12M6,8H10" stroke="#000" stroke-width=".8"/></g>
<rect x="1887" y="86" width="16" height="3" fill="#fafaff" stroke="#a8a8b8" stroke-width=".8"/>
<rect x="1887" y="133" width="16" height="3" fill="#fafaff" stroke="#a8a8b8" stroke-width=".8"/>
<rect x="1887" y="178" width="16" height="3" fill="#fafaff" stroke="#a8a8b8" stroke-width=".8"/>
<rect x="1887" y="224" width="16" height="3" fill="#fafaff" stroke="#a8a8b8" stroke-width=".8"/>
<rect x="1887" y="325" width="16" height="3" fill="#fafaff" stroke="#a8a8b8" stroke-width=".8"/>
<g transform="translate(1892,98)"><path d="M2,6L20,14L3,20Z" fill="#90d0b8" opacity=".8"/><polygon points="12.0,12.0 10.3,13.4 10.5,15.5 8.4,15.3 7.0,17.0 5.6,15.3 3.5,15.5 3.7,13.4 2.0,12.0 3.7,10.6 3.5,8.5 5.6,8.7 7.0,7.0 8.4,8.7 10.5,8.5 10.3,10.6" fill="#e8e8e8" stroke="#000" stroke-width="1.2"/><circle cx="7" cy="12" r="1.5" fill="#000"/><polygon points="18.5,8.0 17.0,9.2 17.2,11.2 15.2,11.0 14.0,12.5 12.8,11.0 10.8,11.2 11.0,9.2 9.5,8.0 11.0,6.8 10.8,4.8 12.8,5.0 14.0,3.5 15.2,5.0 17.2,4.8 17.0,6.8" fill="#d0d0b0" stroke="#000" stroke-width="1.2"/><circle cx="14" cy="8" r="1.3" fill="#000"/></g>
<g transform="translate(1892,148)"><path d="M4,1V15L7.5,11.5L10.5,18L13,17L10,10.5H15Z" fill="#fff0e0" stroke="#f07020" stroke-width="1.6"/></g>
<g transform="translate(1892,190)"><polygon points="13.0,11.0 11.0,12.7 11.2,15.2 8.7,15.0 7.0,17.0 5.3,15.0 2.8,15.2 3.0,12.7 1.0,11.0 3.0,9.3 2.8,6.8 5.3,7.0 7.0,5.0 8.7,7.0 11.2,6.8 11.0,9.3" fill="#f0f0f0" stroke="#303030" stroke-width="1.2"/><circle cx="7" cy="11" r="1.8" fill="#303030"/><path d="M10,2V14L12.5,11.5L15,16L17,15L14.5,10.5H18Z" fill="#f8f0a0" stroke="#000"/></g>
<g transform="translate(1892,237)"><rect x="7" y="1" width="5" height="5" fill="none" stroke="#c02020" stroke-width="1.5"/><rect x="10" y="4" width="9" height="10" fill="#50e0f0" stroke="#000"/><rect x="1" y="10" width="12" height="9" fill="#f0e040" stroke="#000"/><text x="2" y="17" font-size="6" fill="#000">K</text></g>
<g transform="translate(1892,265)"><rect x="7" y="1" width="5" height="5" fill="none" stroke="#c02020" stroke-width="1.5"/><path d="M9,7H15V3L20,9L15,15V11H9Z" fill="#30c040" stroke="#000"/><rect x="1" y="10" width="12" height="9" fill="#f0e040" stroke="#000"/></g>
<g transform="translate(1892,293)"><rect x="7" y="1" width="5" height="5" fill="none" stroke="#c02020" stroke-width="1.5"/><rect x="10" y="4" width="9" height="10" fill="#50e0f0" stroke="#000"/><rect x="1" y="10" width="12" height="9" fill="#f0e040" stroke="#000"/><circle cx="15" cy="14" r="5" fill="none" stroke="#10a020" stroke-width="2.5"/></g>
<g transform="translate(1892,337)"><path d="M2,8L10,4L18,8V18L10,20L2,18Z" fill="#f0e060" stroke="#000"/><path d="M2,8L10,12L18,8M10,12V20" stroke="#000" fill="none"/><path d="M3,6L12,1L16,6" fill="#60e0f0" stroke="#000"/><rect x="14" y="1" width="5" height="5" fill="#fff" stroke="#000"/></g>
<g transform="translate(1892,364)"><rect x="2" y="3" width="5" height="12" fill="none" stroke="#2040c0" stroke-dasharray="1.5,1.5"/><path d="M8,6L16,2V17L8,20Z" fill="#f8f0a0" stroke="#000" stroke-width=".6"/><rect x="13" y="8" width="5" height="11" fill="#3070d0" stroke="#000" stroke-width=".8"/></g>
<g transform="translate(1892,392)"><path d="M3,2H10M3,2V18H11" stroke="#000" fill="none" stroke-width="1.4"/><rect x="5" y="1" width="7" height="3" fill="#40e0f0" stroke="#000" stroke-width=".8"/><path d="M6,7H15M6,11H15M6,15H13" stroke="#000" stroke-width="1.2"/><rect x="9" y="14" width="6" height="4" fill="#e02020" stroke="#000" stroke-width=".6"/></g>
<g transform="translate(1892,420)"><path d="M3,2H10M3,2V18H11" stroke="#000" fill="none" stroke-width="1.4"/><rect x="5" y="1" width="7" height="3" fill="#40e0f0" stroke="#000" stroke-width=".8"/><path d="M6,7H15M6,11H15M6,15H13" stroke="#000" stroke-width="1.2"/><path d="M15,12V19H10" stroke="#e02060" fill="none" stroke-width="1.5"/></g>
<path d="M1906,166h7l-3.5,3.5z" fill="#000"/>
<path d="M1906,208h7l-3.5,3.5z" fill="#000"/>
<path d="M1906,344h7l-3.5,3.5z" fill="#000"/>
<rect x="6" y="1097" width="3" height="14" fill="#fafaff" stroke="#a8a8b8" stroke-width=".8"/>
<rect x="305" y="1097" width="3" height="14" fill="#fafaff" stroke="#a8a8b8" stroke-width=".8"/>
<rect x="514" y="1097" width="3" height="14" fill="#fafaff" stroke="#a8a8b8" stroke-width=".8"/>
<rect x="869" y="1097" width="3" height="14" fill="#fafaff" stroke="#a8a8b8" stroke-width=".8"/>
<rect x="916" y="1097" width="3" height="14" fill="#fafaff" stroke="#a8a8b8" stroke-width=".8"/>
<rect x="964" y="1097" width="3" height="14" fill="#fafaff" stroke="#a8a8b8" stroke-width=".8"/>
<rect x="1066" y="1097" width="3" height="14" fill="#fafaff" stroke="#a8a8b8" stroke-width=".8"/>
<rect x="1113" y="1097" width="3" height="14" fill="#fafaff" stroke="#a8a8b8" stroke-width=".8"/>
<rect x="1160" y="1097" width="3" height="14" fill="#fafaff" stroke="#a8a8b8" stroke-width=".8"/>
<g transform="translate(20,1101)"><path d="M2,1H12L16,5V19H2Z" fill="#fffde0" stroke="#000" stroke-width="1.3"/><path d="M12,1V5H16" fill="#fff" stroke="#000" stroke-width=".8"/></g>
<g transform="translate(46,1101)"><path d="M1,6H7L8,4H12V9H18L14,18H1Z" fill="#f0d040" stroke="#000" stroke-width="1.2"/><path d="M5,10H19L15,18H1Z" fill="#f8c820" stroke="#000" stroke-width="1.2"/><path d="M13,3Q17,1 18,5" stroke="#000" fill="none" stroke-width="1.3"/></g>
<g transform="translate(75,1101)"><rect x="1" y="1" width="17" height="18" rx="1.5" fill="#c8c840" stroke="#000" stroke-width="1.3"/><rect x="4" y="2" width="11" height="7" fill="#f0f4f8" stroke="#000" stroke-width=".5"/><path d="M5,4H14M5,6H14" stroke="#4070c0" stroke-width=".8"/><rect x="4" y="12" width="11" height="6" fill="#000"/><rect x="11" y="13" width="2.5" height="3.5" fill="#fff"/></g>
<g transform="translate(102,1101)"><path d="M5,2H18L15,9H2Z" fill="#fff" stroke="#000"/><path d="M6,4H16M5,6H15" stroke="#4060e0" stroke-width="1.3"/><rect x="1" y="9" width="18" height="6" fill="#e8e8b0" stroke="#000"/><rect x="2" y="15" width="16" height="4" fill="#d0d0a0" stroke="#000"/><path d="M10,12H16" stroke="#30a030" stroke-width="1.5"/></g>
<g transform="translate(130,1101)"><path d="M6,1L12,14M14,1L8,14" stroke="#a8a8a8" stroke-width="1.5"/><circle cx="6" cy="16" r="3" fill="none" stroke="#a8a8a8" stroke-width="1.4"/><circle cx="14" cy="16" r="3" fill="none" stroke="#a8a8a8" stroke-width="1.4"/></g>
<g transform="translate(159,1101)"><path d="M2,1H9L11,3V14H2Z" fill="#f0f0f0" stroke="#a8a8a8"/><path d="M8,6H15L18,9V19H8Z" fill="#f4f4f4" stroke="#a8a8a8"/><path d="M10,10H16M10,13H16M10,16H16" stroke="#b8b8b8"/></g>
<g transform="translate(186,1101)"><rect x="2" y="3" width="12" height="14" fill="#d8d8d8" stroke="#a0a0a0"/><path d="M10,9H16L19,12V19H10Z" fill="#f4f4f4" stroke="#a8a8a8"/><path d="M12,13H17M12,16H17" stroke="#b8b8b8"/></g>
<g transform="translate(214,1101)"><path d="M4,12Q6,3 13,5Q19,8 15,14" stroke="#000" stroke-width="3.5" fill="none"/><path d="M4,12Q6,3 13,5Q19,8 15,14" stroke="#30b070" stroke-width="2" fill="none"/><path d="M1,7L5,14L9,9Z" fill="#30b070" stroke="#000" stroke-width=".8"/></g>
<g transform="translate(242,1101)"><path d="M16,12Q14,3 7,5Q1,8 5,14" stroke="#c8c8c8" stroke-width="3" fill="none"/><path d="M19,7L15,14L11,9Z" fill="#c8c8c8" stroke="#b0b0b0" stroke-width=".8"/></g>
<g transform="translate(270,1101)"><path d="M1,3V16L4.5,12.5L7.5,18L10,17L7,11.5H12Z" fill="#f8f080" stroke="#000"/><text x="10" y="14" font-size="14" font-weight="bold" font-family="Liberation Sans" fill="#2040a0">?</text></g>
<g transform="translate(317,1101)"><text x="0" y="16" font-size="17" font-style="italic" font-family="Liberation Serif" fill="#000">f</text><text x="7" y="17" font-size="9" font-family="Liberation Sans" fill="#000">(x)</text></g>
<g transform="translate(345,1101)"><path d="M10,2C15,2 19,5 19,9C19,13 15,15 10,15L4,19L6,14C3,13 1,11 1,9C1,5 5,2 10,2Z" fill="#fff" stroke="#000" stroke-width="1.4"/><path d="M5,7H15M5,10H13" stroke="#000"/></g>
<g transform="translate(370,1101)"><circle cx="10" cy="6" r="3" fill="none" stroke="#b0b0b0" stroke-width="1.5"/><circle cx="10" cy="14" r="3.5" fill="#b8b8b8"/></g>
<g transform="translate(395,1101)"><rect x="1" y="2" width="17" height="16" fill="#fff" stroke="#0010a0" stroke-width="1"/><rect x="1" y="2" width="17" height="3" fill="#0010a0"/><path d="M1,8H18M1,11H18M1,14H18M5,5V18M9,5V18M13,5V18" stroke="#000" stroke-width="1.5"/></g>
<g transform="translate(424,1101)"><rect x="1" y="8" width="4" height="5" fill="#f0f080" stroke="#2040c0"/><path d="M5,10H15M9,10L14,3M9,10L14,17" stroke="#000"/><rect x="14" y="1" width="4" height="4" fill="#fff" stroke="#2040c0"/><rect x="15" y="8" width="4" height="4" fill="#fff" stroke="#2040c0"/><rect x="14" y="15" width="4" height="4" fill="#fff" stroke="#2040c0"/><path d="M12,2h2M12,6h2" stroke="#e02020"/></g>
<g transform="translate(452,1101)"><path d="M6,9V6Q6,2 10,2Q14,2 14,6V9" stroke="#404040" stroke-width="2" fill="none"/><rect x="3" y="9" width="14" height="10" fill="#808080" stroke="#202020"/><path d="M10,12V16" stroke="#000" stroke-width="1.5"/></g>
<g transform="translate(480,1101)"><rect x="0" y="2" width="5" height="5" fill="#40b080" stroke="#000" stroke-width=".6"/><rect x="0" y="10" width="5" height="5" fill="#40b080" stroke="#000" stroke-width=".6"/><path d="M7,1Q9,1 9,4V8L11,9.5L9,11V16Q9,19 7,19" stroke="#000" fill="none" stroke-width="1.2"/><path d="M13,8H17M13,11H17" stroke="#000" stroke-width="1"/><path d="M1,18H5" stroke="#000" stroke-dasharray="1,1"/></g>
<g transform="translate(526,1101)"><path d="M2,10L8,12L12,6L14,7L12,13L19,16L18,18L11,15L6,18L5,17L8,14L2,12Z" fill="#60d0f0" stroke="#1060a0" stroke-width="1"/><path d="M3,3L6,5" stroke="#000"/></g>
<g transform="translate(554,1101)"><rect x="1" y="2" width="18" height="16" fill="#f8f0a0" stroke="#30a0a0" stroke-width="1.4"/><path d="M10,4V16M3,10H17" stroke="#000" stroke-width="1.2"/><path d="M8,6L10,4L12,6M8,14L10,16L12,14M5,8L3,10L5,12M15,8L17,10L15,12" fill="none" stroke="#000" stroke-width="1.2"/></g>
<g transform="translate(582,1101)"><path d="M10,1V19M1,10H19" stroke="#103080" stroke-width="2.2"/><path d="M6,5L10,1L14,5M6,15L10,19L14,15M5,6L1,10L5,14M15,6L19,10L15,14" fill="#103080" stroke="#103080" stroke-width="1"/><circle cx="10" cy="10" r="2" fill="#103080"/></g>
<g transform="translate(610,1101)"><path d="M1,9Q1,5 9,5H15Q19,6 18,11Q17,16 12,16H5Q1,15 1,9Z" fill="#f8c8c8" stroke="#000" stroke-width="1"/><circle cx="14" cy="15" r="4" fill="#3070d0" stroke="#000"/><path d="M6,9H13" stroke="#000"/></g>
<g transform="translate(639,1101)"><circle cx="8" cy="8" r="6" fill="#fff" stroke="#103080" stroke-width="2"/><path d="M12,12L18,18" stroke="#103080" stroke-width="3"/><path d="M5,8H11M8,5V11" stroke="#000" stroke-width="1.8"/></g>
<g transform="translate(666,1101)"><circle cx="8" cy="8" r="6" fill="#fff" stroke="#103080" stroke-width="2"/><path d="M12,12L18,18" stroke="#103080" stroke-width="3"/><path d="M5,8H11" stroke="#000" stroke-width="1.8"/></g>
<g transform="translate(694,1101)"><path d="M1,18L6,11H19L14,18Z" fill="#40c8e0" stroke="#2060a0"/><path d="M10,3V15" stroke="#e0a040" stroke-dasharray="2,1" stroke-width="1.2"/><path d="M7,6L10,2L13,6" fill="none" stroke="#2060a0" stroke-width="1.2"/></g>
<g transform="translate(722,1101)"><rect x="1" y="2" width="16" height="16" fill="#30d8f0" stroke="#000"/><rect x="9" y="2" width="8" height="8" fill="#b080e0"/><path d="M9,2V18M1,10H17" stroke="#000"/><path d="M17,4H19V20H3V18" fill="#606060"/></g>
<g transform="translate(750,1101)"><path d="M1,7.4H13V19.4H1Z" fill="#50d8f0" stroke="#1030a0" stroke-width="1"/><path d="M1,7.4L6.4,2H18.4L13,7.4Z" fill="#a0ecf8" stroke="#1030a0" stroke-width="1"/><path d="M13,7.4L18.4,2V14L13,19.4Z" fill="#30b0d0" stroke="#1030a0" stroke-width="1"/></g>
<g transform="translate(779,1101)"><path d="M3,4Q3,1 10,1Q17,1 17,4V16Q17,19 10,19Q3,19 3,16Z" fill="#fff" stroke="#000"/><text x="6" y="14" font-size="12" font-weight="bold" font-family="Liberation Sans" fill="#000">?</text></g>
<g transform="translate(806,1101)"><rect x="1" y="1" width="17" height="18" fill="#60d0f0" stroke="#000" stroke-width="1.2"/><path d="M4,12L10,8L16,10L10,15Z" fill="#f8f0a0" stroke="#000" stroke-width=".8"/><path d="M4,8L10,5L15,7L10,10Z" fill="#f8f8d0" stroke="#000" stroke-width=".6"/></g>
<g transform="translate(834,1101)"><rect x="1" y="1" width="17" height="18" fill="#60d0f0" stroke="#000" stroke-width="1.2"/><path d="M4,13L10,9L16,11L10,16Z" fill="#f8f8f0" stroke="#000" stroke-width=".8"/></g>
<g transform="translate(881,1101)"><rect x="1" y="6" width="18" height="11" rx="2" fill="#202020"/><rect x="5" y="3" width="6" height="3" fill="#303030"/><circle cx="11" cy="11.5" r="4" fill="#e0e0e0" stroke="#000" stroke-width="1.5"/><circle cx="11" cy="11.5" r="2" fill="#000"/></g>
<g transform="translate(927,1101)"><circle cx="5" cy="4" r="3" fill="#2080c0"/><path d="M8,3Q15,1 16,8" stroke="#2040a0" fill="none" stroke-width="1.5"/><path d="M14,7l2,3l2,-3z" fill="#2040a0"/><path d="M2,13L6,10H19L15,13Z M2,13H15V19H2Z M15,13L19,10V16L15,19Z" fill="#fff" stroke="#000"/></g>
<g transform="translate(975,1101)"><path d="M2,6H18M2,6L6,3M2,6L6,9M18,6L14,3M18,6L14,9" stroke="#1030a0" stroke-width="1.5" fill="none"/><rect x="1" y="12" width="18" height="6" fill="#f8c8b0" stroke="#2040a0"/><path d="M4,12V15M7,12V14M10,12V15M13,12V14M16,12V15" stroke="#e04040"/></g>
<g transform="translate(1004,1101)"><path d="M8,2H16V15H12V19H8Z" fill="#404040" stroke="#000"/><circle cx="6" cy="9" r="5" fill="#60a0a0"/><circle cx="5" cy="8" r="2" fill="#c0f0e0"/></g>
<g transform="translate(1031,1101)"><circle cx="10" cy="3.5" r="2.5" fill="none" stroke="#000" stroke-width="1.5"/><path d="M4,7H16V19H4Z" fill="#c0a040" stroke="#000"/><path d="M6,8V18" stroke="#f0e080" stroke-width="1.5"/></g>
<g transform="translate(1079,1101)"><circle cx="10" cy="10" r="8" fill="none" stroke="#b8b8b8" stroke-width="2.5"/><path d="M5,10Q5,5 10,5Q15,5 14,10Q13,14 9,13" stroke="#b8b8b8" stroke-width="2.5" fill="none"/></g>
<g transform="translate(1125,1101)"><path d="M1,11L10,2L19,8L10,18Z" fill="#c8f0ff" stroke="#1040c0" stroke-width="1.5"/><path d="M2,13L10,19L19,10" stroke="#1040c0" fill="none" stroke-width="1.5"/><path d="M3,15L10,20" stroke="#60c0f0" stroke-width="1"/></g>
<g transform="translate(1172,1101)"><circle cx="3" cy="3" r="1.4" fill="none" stroke="#f07030"/><path d="M7,3H17M9,1.5L7,3L9,4.5M15,1.5L17,3L15,4.5" stroke="#f07030" fill="none" stroke-width="1.2"/><circle cx="3" cy="8" r="1.4" fill="none" stroke="#f07030"/><path d="M7,8H17M9,6.5L7,8L9,9.5M15,6.5L17,8L15,9.5" stroke="#f07030" fill="none" stroke-width="1.2"/><circle cx="3" cy="13" r="1.4" fill="none" stroke="#f07030"/><path d="M7,13H17M9,11.5L7,13L9,14.5M15,11.5L17,13L15,14.5" stroke="#f07030" fill="none" stroke-width="1.2"/></g>
<path d="M231,1120h7l-3.5,3.5z" fill="#000"/>
<path d="M259,1120h7l-3.5,3.5z" fill="#000"/>
<path d="M412,1120h7l-3.5,3.5z" fill="#000"/>
<path d="M469,1120h7l-3.5,3.5z" fill="#000"/>
<path d="M767,1120h7l-3.5,3.5z" fill="#000"/>
<path d="M795,1120h7l-3.5,3.5z" fill="#000"/>
<path d="M1189,1120h7l-3.5,3.5z" fill="#000"/>
<g><path d="M1876,1094 L1888,1093 L1880,1104" fill="none" stroke="#e02020" stroke-width="2"/><path d="M1895,1100 Q1884,1099 1888,1106 Q1893,1111 1882,1114" fill="none" stroke="#f0a020" stroke-width="3"/><path d="M1877,1104 Q1868,1120 1873,1113 Q1882,1106 1880,1101" fill="none" stroke="#302090" stroke-width="2"/><text x="1885" y="1123" font-size="9" font-weight="bold" font-style="italic" font-family="Liberation Sans" fill="#302080">CATIA</text></g>
<g stroke="#e0d4f4" stroke-width="1.6" fill="#1e4a5c"><ellipse cx="1776" cy="186" rx="34" ry="6"/><path d="M1747,155 C1748,115 1765,97 1773,97 C1790,98 1808,120 1812,150 C1795,145 1765,145 1747,155Z"/><path d="M1773,92V186" fill="none"/></g><rect x="1772" y="181" width="9" height="8" fill="#c00010"/><circle cx="1773" cy="92" r="3" fill="#e0d4f4"/><text x="1776" y="95" font-size="8" fill="#f0e040" font-family="Liberation Sans">z</text><text x="1748" y="158" font-size="8" fill="#f0e040" font-family="Liberation Sans">x</text><text x="1810" y="156" font-size="8" fill="#f0e040" font-family="Liberation Sans">y</text>
</svg>

</body></html>
